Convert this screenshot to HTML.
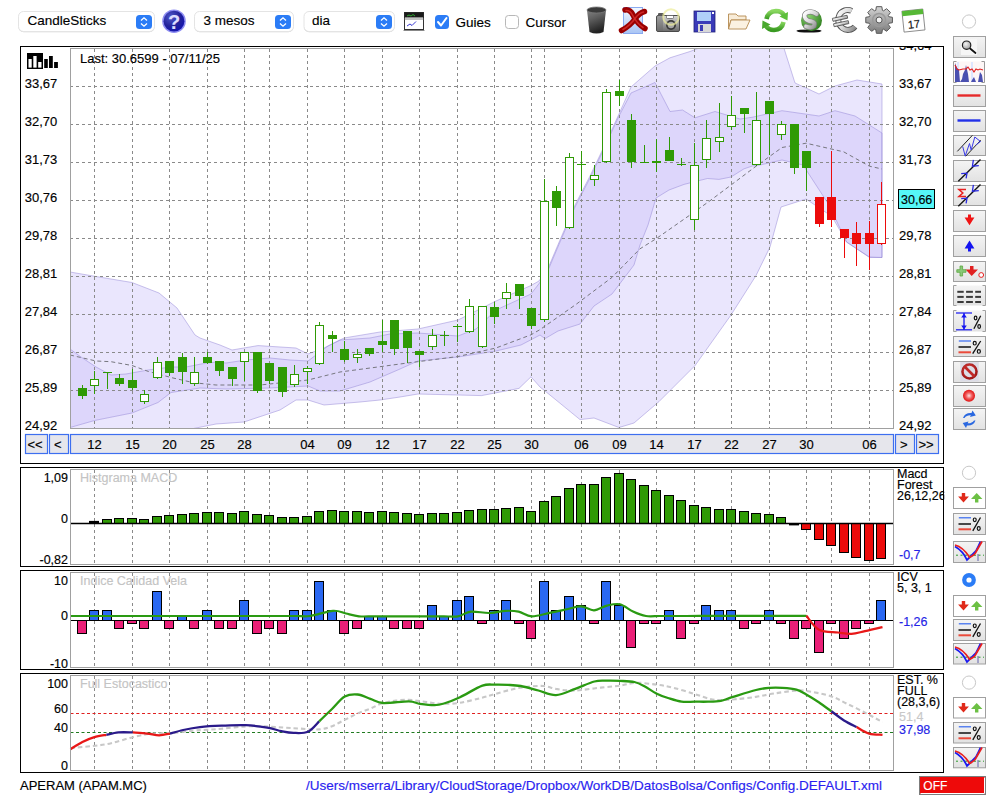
<!DOCTYPE html>
<html><head><meta charset="utf-8"><title>Chart</title>
<style>html,body{margin:0;padding:0;background:#fff;width:1000px;height:800px;overflow:hidden}svg{display:block}</style>
</head><body>
<svg width="1000" height="800" viewBox="0 0 1000 800">
<rect width="1000" height="800" fill="#fff"/>
<defs>
<clipPath id="cmain"><rect x="70.5" y="48.5" width="823.0" height="380.0"/></clipPath>
<clipPath id="kg"><rect x="60" y="670" width="840" height="43.4"/></clipPath>
<clipPath id="kn"><rect x="60" y="713.4" width="840" height="19.2"/></clipPath>
<clipPath id="kr"><rect x="60" y="732.6" width="840" height="40"/></clipPath>
</defs>
<rect x="20.5" y="46.5" width="923" height="417.0" fill="#fff" stroke="#000" stroke-width="1"/>
<rect x="70.5" y="48.5" width="823.0" height="380.0" fill="#fff" stroke="none"/>
<g clip-path="url(#cmain)">
<polygon points="70.0,272.0 96.0,276.5 132.0,282.5 159.0,293.0 177.0,308.0 195.0,335.0 200.0,338.0 220.0,345.0 232.0,350.0 258.0,345.6 296.0,348.0 308.0,354.0 324.0,348.0 344.0,338.0 380.0,332.0 418.0,329.0 458.0,320.0 496.0,301.0 531.0,285.5 539.0,281.0 549.0,266.0 560.0,240.0 575.0,205.0 590.0,176.0 601.0,153.0 619.0,114.0 631.0,87.0 655.0,66.0 670.0,57.8 690.0,51.5 715.0,42.0 782.0,42.0 795.0,83.0 819.0,94.0 835.0,86.0 857.0,80.0 882.0,84.0 882.0,257.5 869.5,257.5 846.5,242.0 832.0,216.5 806.0,199.0 781.0,207.0 770.0,247.0 756.0,275.6 731.0,315.0 695.0,365.6 659.0,401.6 634.0,423.0 619.0,427.5 594.0,418.0 580.0,419.6 558.0,401.6 545.0,391.0 540.0,387.0 531.0,376.8 519.0,388.4 481.5,395.6 418.0,394.0 400.0,397.0 380.0,400.0 360.0,402.0 324.0,405.0 308.0,400.0 296.0,400.0 280.0,410.0 244.0,422.0 216.0,424.0 193.5,428.5 150.0,438.0 70.0,445.0" fill="rgb(108,78,240)" fill-opacity="0.14" stroke="rgb(150,135,215)" stroke-opacity="0.5" stroke-width="1"/>
<polygon points="70.0,349.0 81.0,357.0 96.0,367.0 111.0,375.0 126.0,374.0 148.0,370.0 171.0,367.0 186.0,367.0 201.0,364.0 216.0,362.0 226.0,363.0 246.0,360.0 270.0,358.0 290.0,360.0 308.0,361.0 328.0,346.0 340.0,340.0 370.0,338.0 390.0,334.0 418.0,333.0 458.0,336.0 476.0,329.0 496.0,310.0 531.0,294.0 539.5,283.0 549.0,268.0 560.0,242.0 575.0,207.0 590.0,178.0 601.0,155.0 619.0,116.0 631.0,93.0 655.0,82.5 670.0,111.5 682.5,110.0 695.0,117.8 715.0,111.5 740.0,119.0 752.0,117.3 782.0,110.7 819.0,116.0 835.0,110.7 855.0,116.0 882.0,133.0 882.0,257.5 869.5,257.0 846.5,242.0 829.0,205.0 803.0,165.0 782.0,160.0 760.0,165.0 752.5,166.0 744.0,168.8 731.0,177.0 719.0,179.4 707.5,178.5 699.0,180.6 684.0,184.4 669.0,190.0 656.0,198.0 648.0,225.0 640.0,245.0 634.0,265.0 612.0,294.0 594.0,306.0 580.0,324.0 558.0,331.0 545.0,338.6 540.0,335.0 521.0,345.0 496.0,351.0 458.0,357.0 417.7,361.0 400.0,369.0 370.0,382.0 340.0,391.0 320.0,391.0 308.0,386.0 270.0,388.0 226.0,389.0 200.0,388.0 171.0,392.5 158.0,402.5 132.0,413.0 94.5,420.5 70.0,427.5" fill="rgb(108,78,240)" fill-opacity="0.10" stroke="rgb(150,135,215)" stroke-opacity="0.5" stroke-width="1"/>
</g>
<line x1="70" y1="86.5" x2="893.5" y2="86.5" stroke="#8a8a8a" stroke-width="1" stroke-dasharray="3,3"/>
<line x1="70" y1="124.5" x2="893.5" y2="124.5" stroke="#8a8a8a" stroke-width="1" stroke-dasharray="3,3"/>
<line x1="70" y1="162.5" x2="893.5" y2="162.5" stroke="#8a8a8a" stroke-width="1" stroke-dasharray="3,3"/>
<line x1="70" y1="200.5" x2="893.5" y2="200.5" stroke="#8a8a8a" stroke-width="1" stroke-dasharray="3,3"/>
<line x1="70" y1="238.5" x2="893.5" y2="238.5" stroke="#8a8a8a" stroke-width="1" stroke-dasharray="3,3"/>
<line x1="70" y1="276.5" x2="893.5" y2="276.5" stroke="#8a8a8a" stroke-width="1" stroke-dasharray="3,3"/>
<line x1="70" y1="314.5" x2="893.5" y2="314.5" stroke="#8a8a8a" stroke-width="1" stroke-dasharray="3,3"/>
<line x1="70" y1="352.5" x2="893.5" y2="352.5" stroke="#8a8a8a" stroke-width="1" stroke-dasharray="3,3"/>
<line x1="70" y1="390.5" x2="893.5" y2="390.5" stroke="#8a8a8a" stroke-width="1" stroke-dasharray="3,3"/>
<line x1="94.5" y1="49" x2="94.5" y2="428.5" stroke="#8a8a8a" stroke-width="1" stroke-dasharray="3,3"/>
<line x1="132.5" y1="49" x2="132.5" y2="428.5" stroke="#8a8a8a" stroke-width="1" stroke-dasharray="3,3"/>
<line x1="169.5" y1="49" x2="169.5" y2="428.5" stroke="#8a8a8a" stroke-width="1" stroke-dasharray="3,3"/>
<line x1="207.5" y1="49" x2="207.5" y2="428.5" stroke="#8a8a8a" stroke-width="1" stroke-dasharray="3,3"/>
<line x1="244.5" y1="49" x2="244.5" y2="428.5" stroke="#8a8a8a" stroke-width="1" stroke-dasharray="3,3"/>
<line x1="269.5" y1="49" x2="269.5" y2="428.5" stroke="#8a8a8a" stroke-width="1" stroke-dasharray="3,3"/>
<line x1="307.5" y1="49" x2="307.5" y2="428.5" stroke="#8a8a8a" stroke-width="1" stroke-dasharray="3,3"/>
<line x1="344.5" y1="49" x2="344.5" y2="428.5" stroke="#8a8a8a" stroke-width="1" stroke-dasharray="3,3"/>
<line x1="382.5" y1="49" x2="382.5" y2="428.5" stroke="#8a8a8a" stroke-width="1" stroke-dasharray="3,3"/>
<line x1="419.5" y1="49" x2="419.5" y2="428.5" stroke="#8a8a8a" stroke-width="1" stroke-dasharray="3,3"/>
<line x1="457.5" y1="49" x2="457.5" y2="428.5" stroke="#8a8a8a" stroke-width="1" stroke-dasharray="3,3"/>
<line x1="494.5" y1="49" x2="494.5" y2="428.5" stroke="#8a8a8a" stroke-width="1" stroke-dasharray="3,3"/>
<line x1="531.5" y1="49" x2="531.5" y2="428.5" stroke="#8a8a8a" stroke-width="1" stroke-dasharray="3,3"/>
<line x1="544.5" y1="49" x2="544.5" y2="428.5" stroke="#8a8a8a" stroke-width="1" stroke-dasharray="3,3"/>
<line x1="581.5" y1="49" x2="581.5" y2="428.5" stroke="#8a8a8a" stroke-width="1" stroke-dasharray="3,3"/>
<line x1="619.5" y1="49" x2="619.5" y2="428.5" stroke="#8a8a8a" stroke-width="1" stroke-dasharray="3,3"/>
<line x1="656.5" y1="49" x2="656.5" y2="428.5" stroke="#8a8a8a" stroke-width="1" stroke-dasharray="3,3"/>
<line x1="694.5" y1="49" x2="694.5" y2="428.5" stroke="#8a8a8a" stroke-width="1" stroke-dasharray="3,3"/>
<line x1="731.5" y1="49" x2="731.5" y2="428.5" stroke="#8a8a8a" stroke-width="1" stroke-dasharray="3,3"/>
<line x1="769.5" y1="49" x2="769.5" y2="428.5" stroke="#8a8a8a" stroke-width="1" stroke-dasharray="3,3"/>
<line x1="806.5" y1="49" x2="806.5" y2="428.5" stroke="#8a8a8a" stroke-width="1" stroke-dasharray="3,3"/>
<line x1="831.5" y1="49" x2="831.5" y2="428.5" stroke="#8a8a8a" stroke-width="1" stroke-dasharray="3,3"/>
<line x1="869.5" y1="49" x2="869.5" y2="428.5" stroke="#8a8a8a" stroke-width="1" stroke-dasharray="3,3"/>
<polyline points="70.0,355.0 96.0,361.0 111.0,361.7 132.0,365.5 148.5,371.5 171.0,377.5 193.5,382.7 216.0,385.0 260.0,385.0 308.0,380.0 340.0,372.0 380.0,366.7 400.0,364.0 458.0,356.5 496.0,348.0 531.0,334.8 540.0,329.6 576.0,304.4 612.0,277.4 640.0,248.8 656.0,238.8 690.0,215.0 711.0,200.0 731.0,185.0 755.0,167.0 782.0,147.5 806.0,143.2 843.6,151.8 869.5,166.2 882.0,169.0" fill="none" stroke="#77777f" stroke-width="1" stroke-dasharray="4,3"/>
<line x1="82.5" y1="385" x2="82.5" y2="399" stroke="#2f9a05" stroke-width="1"/>
<rect x="78.0" y="388" width="9" height="8" fill="#2f9a05"/>
<line x1="94.5" y1="371" x2="94.5" y2="394" stroke="#2f9a05" stroke-width="1"/>
<rect x="90.5" y="379.5" width="8" height="6" fill="#fff" stroke="#2f9a05" stroke-width="1"/>
<line x1="107.5" y1="372" x2="107.5" y2="389" stroke="#2f9a05" stroke-width="1"/>
<line x1="103.0" y1="372.5" x2="112.0" y2="372.5" stroke="#2f9a05" stroke-width="1"/>
<line x1="119.5" y1="374" x2="119.5" y2="386" stroke="#2f9a05" stroke-width="1"/>
<rect x="115.0" y="378" width="9" height="6" fill="#2f9a05"/>
<line x1="132.5" y1="369" x2="132.5" y2="390" stroke="#2f9a05" stroke-width="1"/>
<rect x="128.0" y="380" width="9" height="8" fill="#2f9a05"/>
<line x1="144.5" y1="390" x2="144.5" y2="404" stroke="#2f9a05" stroke-width="1"/>
<rect x="140.5" y="394.5" width="8" height="7" fill="#fff" stroke="#2f9a05" stroke-width="1"/>
<line x1="157.5" y1="357" x2="157.5" y2="379" stroke="#2f9a05" stroke-width="1"/>
<rect x="153.5" y="362.5" width="8" height="15" fill="#fff" stroke="#2f9a05" stroke-width="1"/>
<line x1="169.5" y1="361" x2="169.5" y2="376" stroke="#2f9a05" stroke-width="1"/>
<rect x="165.0" y="361" width="9" height="12" fill="#2f9a05"/>
<line x1="182.5" y1="353" x2="182.5" y2="384" stroke="#2f9a05" stroke-width="1"/>
<rect x="178.0" y="357" width="9" height="15" fill="#2f9a05"/>
<line x1="194.5" y1="357" x2="194.5" y2="386" stroke="#2f9a05" stroke-width="1"/>
<rect x="190.5" y="372.5" width="8" height="11" fill="#fff" stroke="#2f9a05" stroke-width="1"/>
<line x1="207.5" y1="352" x2="207.5" y2="364" stroke="#2f9a05" stroke-width="1"/>
<rect x="203.0" y="357" width="9" height="6" fill="#2f9a05"/>
<line x1="219.5" y1="361" x2="219.5" y2="376" stroke="#2f9a05" stroke-width="1"/>
<rect x="215.0" y="361" width="9" height="10" fill="#2f9a05"/>
<line x1="232.5" y1="367" x2="232.5" y2="386" stroke="#2f9a05" stroke-width="1"/>
<rect x="228.0" y="367" width="9" height="12" fill="#2f9a05"/>
<line x1="244.5" y1="352" x2="244.5" y2="381" stroke="#2f9a05" stroke-width="1"/>
<rect x="240.5" y="352.5" width="8" height="9" fill="#fff" stroke="#2f9a05" stroke-width="1"/>
<line x1="257.5" y1="352" x2="257.5" y2="393" stroke="#2f9a05" stroke-width="1"/>
<rect x="253.0" y="352" width="9" height="39" fill="#2f9a05"/>
<line x1="269.5" y1="363" x2="269.5" y2="384" stroke="#2f9a05" stroke-width="1"/>
<rect x="265.0" y="363" width="9" height="18" fill="#2f9a05"/>
<line x1="282.5" y1="367" x2="282.5" y2="397" stroke="#2f9a05" stroke-width="1"/>
<rect x="278.0" y="367" width="9" height="25" fill="#2f9a05"/>
<line x1="294.5" y1="365" x2="294.5" y2="387" stroke="#2f9a05" stroke-width="1"/>
<rect x="290.5" y="374.5" width="8" height="10" fill="#fff" stroke="#2f9a05" stroke-width="1"/>
<line x1="307.5" y1="366" x2="307.5" y2="384" stroke="#2f9a05" stroke-width="1"/>
<rect x="303.5" y="368.5" width="8" height="3" fill="#fff" stroke="#2f9a05" stroke-width="1"/>
<line x1="319.5" y1="322" x2="319.5" y2="365" stroke="#2f9a05" stroke-width="1"/>
<rect x="315.5" y="325.5" width="8" height="38" fill="#fff" stroke="#2f9a05" stroke-width="1"/>
<line x1="332.5" y1="331" x2="332.5" y2="352" stroke="#2f9a05" stroke-width="1"/>
<rect x="328.0" y="335" width="9" height="4" fill="#2f9a05"/>
<line x1="344.5" y1="341" x2="344.5" y2="362" stroke="#2f9a05" stroke-width="1"/>
<rect x="340.0" y="349" width="9" height="11" fill="#2f9a05"/>
<line x1="357.5" y1="349" x2="357.5" y2="363" stroke="#2f9a05" stroke-width="1"/>
<rect x="353.5" y="354.5" width="8" height="3" fill="#fff" stroke="#2f9a05" stroke-width="1"/>
<line x1="369.5" y1="348" x2="369.5" y2="356" stroke="#2f9a05" stroke-width="1"/>
<rect x="365.0" y="348" width="9" height="6" fill="#2f9a05"/>
<line x1="382.5" y1="320" x2="382.5" y2="352" stroke="#2f9a05" stroke-width="1"/>
<rect x="378.0" y="341" width="9" height="4" fill="#2f9a05"/>
<line x1="394.5" y1="320" x2="394.5" y2="355" stroke="#2f9a05" stroke-width="1"/>
<rect x="390.0" y="320" width="9" height="29" fill="#2f9a05"/>
<line x1="407.5" y1="331" x2="407.5" y2="363" stroke="#2f9a05" stroke-width="1"/>
<rect x="403.0" y="331" width="9" height="17" fill="#2f9a05"/>
<line x1="419.5" y1="351" x2="419.5" y2="367" stroke="#2f9a05" stroke-width="1"/>
<rect x="415.0" y="351" width="9" height="4" fill="#2f9a05"/>
<line x1="432.5" y1="329" x2="432.5" y2="350" stroke="#2f9a05" stroke-width="1"/>
<rect x="428.5" y="335.5" width="8" height="11" fill="#fff" stroke="#2f9a05" stroke-width="1"/>
<line x1="444.5" y1="331" x2="444.5" y2="346" stroke="#2f9a05" stroke-width="1"/>
<line x1="440.0" y1="335.5" x2="449.0" y2="335.5" stroke="#2f9a05" stroke-width="1"/>
<line x1="457.5" y1="324" x2="457.5" y2="342" stroke="#2f9a05" stroke-width="1"/>
<line x1="453.0" y1="326.5" x2="462.0" y2="326.5" stroke="#2f9a05" stroke-width="1"/>
<line x1="469.5" y1="299" x2="469.5" y2="333" stroke="#2f9a05" stroke-width="1"/>
<rect x="465.5" y="306.5" width="8" height="25" fill="#fff" stroke="#2f9a05" stroke-width="1"/>
<line x1="482.5" y1="306" x2="482.5" y2="348" stroke="#2f9a05" stroke-width="1"/>
<rect x="478.5" y="306.5" width="8" height="40" fill="#fff" stroke="#2f9a05" stroke-width="1"/>
<line x1="494.5" y1="302" x2="494.5" y2="324" stroke="#2f9a05" stroke-width="1"/>
<rect x="490.0" y="307" width="9" height="10" fill="#2f9a05"/>
<line x1="506.5" y1="283" x2="506.5" y2="309" stroke="#2f9a05" stroke-width="1"/>
<rect x="502.5" y="292.5" width="8" height="6" fill="#fff" stroke="#2f9a05" stroke-width="1"/>
<line x1="519.5" y1="284" x2="519.5" y2="309" stroke="#2f9a05" stroke-width="1"/>
<rect x="515.0" y="284" width="9" height="12" fill="#2f9a05"/>
<line x1="531.5" y1="308" x2="531.5" y2="329" stroke="#2f9a05" stroke-width="1"/>
<rect x="527.0" y="308" width="9" height="18" fill="#2f9a05"/>
<line x1="544.5" y1="179" x2="544.5" y2="322" stroke="#2f9a05" stroke-width="1"/>
<rect x="540.5" y="201.5" width="8" height="118" fill="#fff" stroke="#2f9a05" stroke-width="1"/>
<line x1="556.5" y1="186" x2="556.5" y2="226" stroke="#2f9a05" stroke-width="1"/>
<rect x="552.0" y="191" width="9" height="17" fill="#2f9a05"/>
<line x1="569.5" y1="153" x2="569.5" y2="229" stroke="#2f9a05" stroke-width="1"/>
<rect x="565.5" y="157.5" width="8" height="70" fill="#fff" stroke="#2f9a05" stroke-width="1"/>
<line x1="581.5" y1="151" x2="581.5" y2="191" stroke="#2f9a05" stroke-width="1"/>
<line x1="577.0" y1="164.5" x2="586.0" y2="164.5" stroke="#2f9a05" stroke-width="1"/>
<line x1="594.5" y1="165" x2="594.5" y2="186" stroke="#2f9a05" stroke-width="1"/>
<rect x="590.5" y="175.5" width="8" height="4" fill="#fff" stroke="#2f9a05" stroke-width="1"/>
<line x1="606.5" y1="89" x2="606.5" y2="163" stroke="#2f9a05" stroke-width="1"/>
<rect x="602.5" y="92.5" width="8" height="69" fill="#fff" stroke="#2f9a05" stroke-width="1"/>
<line x1="619.5" y1="80" x2="619.5" y2="106" stroke="#2f9a05" stroke-width="1"/>
<rect x="615.0" y="91" width="9" height="5" fill="#2f9a05"/>
<line x1="631.5" y1="114" x2="631.5" y2="168" stroke="#2f9a05" stroke-width="1"/>
<rect x="627.0" y="120" width="9" height="42" fill="#2f9a05"/>
<line x1="644.5" y1="145" x2="644.5" y2="162" stroke="#2f9a05" stroke-width="1"/>
<line x1="640.0" y1="162.5" x2="649.0" y2="162.5" stroke="#2f9a05" stroke-width="1"/>
<line x1="656.5" y1="139" x2="656.5" y2="172" stroke="#2f9a05" stroke-width="1"/>
<rect x="652.0" y="161" width="9" height="2" fill="#2f9a05"/>
<line x1="669.5" y1="137" x2="669.5" y2="161" stroke="#2f9a05" stroke-width="1"/>
<rect x="665.0" y="150" width="9" height="11" fill="#2f9a05"/>
<line x1="681.5" y1="158" x2="681.5" y2="166" stroke="#2f9a05" stroke-width="1"/>
<line x1="677.0" y1="164.5" x2="686.0" y2="164.5" stroke="#2f9a05" stroke-width="1"/>
<line x1="694.5" y1="143" x2="694.5" y2="230" stroke="#2f9a05" stroke-width="1"/>
<rect x="690.5" y="165.5" width="8" height="54" fill="#fff" stroke="#2f9a05" stroke-width="1"/>
<line x1="706.5" y1="120" x2="706.5" y2="168" stroke="#2f9a05" stroke-width="1"/>
<rect x="702.5" y="138.5" width="8" height="21" fill="#fff" stroke="#2f9a05" stroke-width="1"/>
<line x1="719.5" y1="103" x2="719.5" y2="152" stroke="#2f9a05" stroke-width="1"/>
<rect x="715.5" y="137.5" width="8" height="4" fill="#fff" stroke="#2f9a05" stroke-width="1"/>
<line x1="731.5" y1="96" x2="731.5" y2="130" stroke="#2f9a05" stroke-width="1"/>
<rect x="727.5" y="115.5" width="8" height="11" fill="#fff" stroke="#2f9a05" stroke-width="1"/>
<line x1="744.5" y1="108" x2="744.5" y2="133" stroke="#2f9a05" stroke-width="1"/>
<rect x="740.0" y="108" width="9" height="6" fill="#2f9a05"/>
<line x1="756.5" y1="92" x2="756.5" y2="166" stroke="#2f9a05" stroke-width="1"/>
<rect x="752.5" y="120.5" width="8" height="44" fill="#fff" stroke="#2f9a05" stroke-width="1"/>
<line x1="769.5" y1="101" x2="769.5" y2="155" stroke="#2f9a05" stroke-width="1"/>
<rect x="765.0" y="101" width="9" height="13" fill="#2f9a05"/>
<line x1="781.5" y1="121" x2="781.5" y2="140" stroke="#2f9a05" stroke-width="1"/>
<rect x="777.5" y="124.5" width="8" height="10" fill="#fff" stroke="#2f9a05" stroke-width="1"/>
<line x1="794.5" y1="124" x2="794.5" y2="174" stroke="#2f9a05" stroke-width="1"/>
<rect x="790.0" y="124" width="9" height="44" fill="#2f9a05"/>
<line x1="806.5" y1="151" x2="806.5" y2="191" stroke="#2f9a05" stroke-width="1"/>
<rect x="802.0" y="151" width="9" height="17" fill="#2f9a05"/>
<line x1="819.5" y1="197" x2="819.5" y2="227" stroke="#ec0b0b" stroke-width="1"/>
<rect x="815.0" y="197" width="9" height="27" fill="#ec0b0b"/>
<line x1="831.5" y1="151" x2="831.5" y2="227" stroke="#ec0b0b" stroke-width="1"/>
<rect x="827.0" y="197" width="9" height="23" fill="#ec0b0b"/>
<line x1="844.5" y1="229" x2="844.5" y2="258" stroke="#ec0b0b" stroke-width="1"/>
<rect x="840.0" y="229" width="9" height="9" fill="#ec0b0b"/>
<line x1="856.5" y1="222" x2="856.5" y2="266" stroke="#ec0b0b" stroke-width="1"/>
<rect x="852.0" y="233" width="9" height="11" fill="#ec0b0b"/>
<line x1="869.5" y1="221" x2="869.5" y2="270" stroke="#ec0b0b" stroke-width="1"/>
<rect x="865.0" y="233" width="9" height="11" fill="#ec0b0b"/>
<line x1="881.5" y1="182" x2="881.5" y2="245" stroke="#ec0b0b" stroke-width="1"/>
<rect x="877.5" y="204.5" width="8" height="39" fill="#fff" stroke="#ec0b0b" stroke-width="1"/>
<rect x="70.5" y="48.5" width="823.0" height="380.0" fill="none" stroke="#a0a0a0" stroke-width="1"/>
<g font-family="Liberation Sans, sans-serif" font-size="13" fill="#000" stroke="#000" stroke-width="0.15">
<text x="24.8" y="88">33,67</text>
<text x="899" y="88">33,67</text>
<text x="24.8" y="126">32,70</text>
<text x="899" y="126">32,70</text>
<text x="24.8" y="164">31,73</text>
<text x="899" y="164">31,73</text>
<text x="24.8" y="202">30,76</text>
<text x="24.8" y="240">29,78</text>
<text x="899" y="240">29,78</text>
<text x="24.8" y="278">28,81</text>
<text x="899" y="278">28,81</text>
<text x="24.8" y="316">27,84</text>
<text x="899" y="316">27,84</text>
<text x="24.8" y="354">26,87</text>
<text x="899" y="354">26,87</text>
<text x="24.8" y="392">25,89</text>
<text x="899" y="392">25,89</text>
<text x="24.8" y="430">24,92</text>
<text x="899" y="430">24,92</text>
<text x="899" y="50">34,64</text>
</g>
<rect x="894" y="40" width="49" height="6" fill="#fff"/>
<rect x="20.5" y="46.5" width="923" height="417" fill="none" stroke="#000" stroke-width="1"/>
<rect x="898.5" y="189.5" width="36" height="19" fill="#55f7f7" stroke="#000" stroke-width="1"/>
<text x="901" y="203.5" font-family="Liberation Sans, sans-serif" font-size="12.5" fill="#000" stroke="#000" stroke-width="0.15">30,66</text>
<text x="80" y="62.7" font-family="Liberation Sans, sans-serif" font-size="13" fill="#000" stroke="#000" stroke-width="0.15">Last: 30.6599 - 07/11/25</text>
<rect x="27" y="53" width="16" height="16" fill="#000"/>
<rect x="28.5" y="59" width="3.2" height="8.6" fill="#fff"/><rect x="33.3" y="56" width="3.3" height="11.6" fill="#fff"/><rect x="38.2" y="62" width="3.3" height="5.6" fill="#fff"/>
<rect x="44.2" y="59" width="3.6" height="9" fill="#000"/><rect x="49" y="56" width="3.8" height="12" fill="#000"/><rect x="54.1" y="62" width="3.8" height="6" fill="#000"/>
<rect x="25.5" y="434.5" width="22" height="19" fill="#e6e6ec" stroke="#3d6ff0" stroke-width="1.2"/>
<rect x="49.5" y="434.5" width="19" height="19" fill="#e6e6ec" stroke="#3d6ff0" stroke-width="1.2"/>
<rect x="70.5" y="434.5" width="823" height="19" fill="#e6e6ec" stroke="#3d6ff0" stroke-width="1.2"/>
<rect x="895.5" y="434.5" width="19" height="19" fill="#e6e6ec" stroke="#3d6ff0" stroke-width="1.2"/>
<rect x="916.5" y="434.5" width="22" height="19" fill="#e6e6ec" stroke="#3d6ff0" stroke-width="1.2"/>
<g font-family="Liberation Sans, sans-serif" font-size="13" fill="#000" stroke="#000" stroke-width="0.15">
<text x="27.5" y="449">&lt;&lt;</text><text x="54" y="449">&lt;</text><text x="900" y="449">&gt;</text><text x="918.5" y="449">&gt;&gt;</text>
<text x="94.5" y="449" text-anchor="middle">12</text>
<text x="132.5" y="449" text-anchor="middle">15</text>
<text x="169.5" y="449" text-anchor="middle">20</text>
<text x="207.5" y="449" text-anchor="middle">25</text>
<text x="244.5" y="449" text-anchor="middle">28</text>
<text x="307.5" y="449" text-anchor="middle">04</text>
<text x="344.5" y="449" text-anchor="middle">09</text>
<text x="382.5" y="449" text-anchor="middle">12</text>
<text x="419.5" y="449" text-anchor="middle">17</text>
<text x="457.5" y="449" text-anchor="middle">22</text>
<text x="494.5" y="449" text-anchor="middle">25</text>
<text x="531.5" y="449" text-anchor="middle">30</text>
<text x="581.5" y="449" text-anchor="middle">06</text>
<text x="619.5" y="449" text-anchor="middle">09</text>
<text x="656.5" y="449" text-anchor="middle">14</text>
<text x="694.5" y="449" text-anchor="middle">17</text>
<text x="731.5" y="449" text-anchor="middle">22</text>
<text x="769.5" y="449" text-anchor="middle">27</text>
<text x="806.5" y="449" text-anchor="middle">30</text>
<text x="869.5" y="449" text-anchor="middle">06</text>
</g>
<rect x="20.5" y="467.5" width="923" height="99.0" fill="#fff" stroke="#000" stroke-width="1"/>
<line x1="94.5" y1="470" x2="94.5" y2="564.5" stroke="#8a8a8a" stroke-width="1" stroke-dasharray="3,3"/>
<line x1="132.5" y1="470" x2="132.5" y2="564.5" stroke="#8a8a8a" stroke-width="1" stroke-dasharray="3,3"/>
<line x1="169.5" y1="470" x2="169.5" y2="564.5" stroke="#8a8a8a" stroke-width="1" stroke-dasharray="3,3"/>
<line x1="207.5" y1="470" x2="207.5" y2="564.5" stroke="#8a8a8a" stroke-width="1" stroke-dasharray="3,3"/>
<line x1="244.5" y1="470" x2="244.5" y2="564.5" stroke="#8a8a8a" stroke-width="1" stroke-dasharray="3,3"/>
<line x1="269.5" y1="470" x2="269.5" y2="564.5" stroke="#8a8a8a" stroke-width="1" stroke-dasharray="3,3"/>
<line x1="307.5" y1="470" x2="307.5" y2="564.5" stroke="#8a8a8a" stroke-width="1" stroke-dasharray="3,3"/>
<line x1="344.5" y1="470" x2="344.5" y2="564.5" stroke="#8a8a8a" stroke-width="1" stroke-dasharray="3,3"/>
<line x1="382.5" y1="470" x2="382.5" y2="564.5" stroke="#8a8a8a" stroke-width="1" stroke-dasharray="3,3"/>
<line x1="419.5" y1="470" x2="419.5" y2="564.5" stroke="#8a8a8a" stroke-width="1" stroke-dasharray="3,3"/>
<line x1="457.5" y1="470" x2="457.5" y2="564.5" stroke="#8a8a8a" stroke-width="1" stroke-dasharray="3,3"/>
<line x1="494.5" y1="470" x2="494.5" y2="564.5" stroke="#8a8a8a" stroke-width="1" stroke-dasharray="3,3"/>
<line x1="531.5" y1="470" x2="531.5" y2="564.5" stroke="#8a8a8a" stroke-width="1" stroke-dasharray="3,3"/>
<line x1="544.5" y1="470" x2="544.5" y2="564.5" stroke="#8a8a8a" stroke-width="1" stroke-dasharray="3,3"/>
<line x1="581.5" y1="470" x2="581.5" y2="564.5" stroke="#8a8a8a" stroke-width="1" stroke-dasharray="3,3"/>
<line x1="619.5" y1="470" x2="619.5" y2="564.5" stroke="#8a8a8a" stroke-width="1" stroke-dasharray="3,3"/>
<line x1="656.5" y1="470" x2="656.5" y2="564.5" stroke="#8a8a8a" stroke-width="1" stroke-dasharray="3,3"/>
<line x1="694.5" y1="470" x2="694.5" y2="564.5" stroke="#8a8a8a" stroke-width="1" stroke-dasharray="3,3"/>
<line x1="731.5" y1="470" x2="731.5" y2="564.5" stroke="#8a8a8a" stroke-width="1" stroke-dasharray="3,3"/>
<line x1="769.5" y1="470" x2="769.5" y2="564.5" stroke="#8a8a8a" stroke-width="1" stroke-dasharray="3,3"/>
<line x1="806.5" y1="470" x2="806.5" y2="564.5" stroke="#8a8a8a" stroke-width="1" stroke-dasharray="3,3"/>
<line x1="831.5" y1="470" x2="831.5" y2="564.5" stroke="#8a8a8a" stroke-width="1" stroke-dasharray="3,3"/>
<line x1="869.5" y1="470" x2="869.5" y2="564.5" stroke="#8a8a8a" stroke-width="1" stroke-dasharray="3,3"/>
<text x="80" y="481.7" font-family="Liberation Sans, sans-serif" font-size="12.5" fill="#c4c4c4" stroke="#c4c4c4" stroke-width="0.15">Histgrama MACD</text>
<rect x="89.0" y="520.9" width="10" height="3.1000000000000227" fill="#000"/>
<rect x="102.5" y="519.5" width="9" height="4.0" fill="#2f9a05" stroke="#000" stroke-width="1"/>
<rect x="114.5" y="518.5" width="9" height="5.0" fill="#2f9a05" stroke="#000" stroke-width="1"/>
<rect x="127.5" y="518.5" width="9" height="5.0" fill="#2f9a05" stroke="#000" stroke-width="1"/>
<rect x="139.5" y="519.5" width="9" height="4.0" fill="#2f9a05" stroke="#000" stroke-width="1"/>
<rect x="152.5" y="516.5" width="9" height="7.0" fill="#2f9a05" stroke="#000" stroke-width="1"/>
<rect x="164.5" y="515.5" width="9" height="8.0" fill="#2f9a05" stroke="#000" stroke-width="1"/>
<rect x="177.5" y="514.5" width="9" height="9.0" fill="#2f9a05" stroke="#000" stroke-width="1"/>
<rect x="189.5" y="513.5" width="9" height="10.0" fill="#2f9a05" stroke="#000" stroke-width="1"/>
<rect x="202.5" y="512.5" width="9" height="11.0" fill="#2f9a05" stroke="#000" stroke-width="1"/>
<rect x="214.5" y="512.5" width="9" height="11.0" fill="#2f9a05" stroke="#000" stroke-width="1"/>
<rect x="227.5" y="513.5" width="9" height="10.0" fill="#2f9a05" stroke="#000" stroke-width="1"/>
<rect x="239.5" y="511.5" width="9" height="12.0" fill="#2f9a05" stroke="#000" stroke-width="1"/>
<rect x="252.5" y="514.5" width="9" height="9.0" fill="#2f9a05" stroke="#000" stroke-width="1"/>
<rect x="264.5" y="515.5" width="9" height="8.0" fill="#2f9a05" stroke="#000" stroke-width="1"/>
<rect x="277.5" y="517.5" width="9" height="6.0" fill="#2f9a05" stroke="#000" stroke-width="1"/>
<rect x="289.5" y="517.5" width="9" height="6.0" fill="#2f9a05" stroke="#000" stroke-width="1"/>
<rect x="302.5" y="516.5" width="9" height="7.0" fill="#2f9a05" stroke="#000" stroke-width="1"/>
<rect x="314.5" y="511.5" width="9" height="12.0" fill="#2f9a05" stroke="#000" stroke-width="1"/>
<rect x="327.5" y="510.5" width="9" height="13.0" fill="#2f9a05" stroke="#000" stroke-width="1"/>
<rect x="339.5" y="511.5" width="9" height="12.0" fill="#2f9a05" stroke="#000" stroke-width="1"/>
<rect x="352.5" y="511.5" width="9" height="12.0" fill="#2f9a05" stroke="#000" stroke-width="1"/>
<rect x="364.5" y="512.5" width="9" height="11.0" fill="#2f9a05" stroke="#000" stroke-width="1"/>
<rect x="377.5" y="511.5" width="9" height="12.0" fill="#2f9a05" stroke="#000" stroke-width="1"/>
<rect x="389.5" y="512.5" width="9" height="11.0" fill="#2f9a05" stroke="#000" stroke-width="1"/>
<rect x="402.5" y="513.5" width="9" height="10.0" fill="#2f9a05" stroke="#000" stroke-width="1"/>
<rect x="414.5" y="514.5" width="9" height="9.0" fill="#2f9a05" stroke="#000" stroke-width="1"/>
<rect x="427.5" y="513.5" width="9" height="10.0" fill="#2f9a05" stroke="#000" stroke-width="1"/>
<rect x="439.5" y="513.5" width="9" height="10.0" fill="#2f9a05" stroke="#000" stroke-width="1"/>
<rect x="452.5" y="512.5" width="9" height="11.0" fill="#2f9a05" stroke="#000" stroke-width="1"/>
<rect x="464.5" y="510.5" width="9" height="13.0" fill="#2f9a05" stroke="#000" stroke-width="1"/>
<rect x="477.5" y="509.5" width="9" height="14.0" fill="#2f9a05" stroke="#000" stroke-width="1"/>
<rect x="489.5" y="509.5" width="9" height="14.0" fill="#2f9a05" stroke="#000" stroke-width="1"/>
<rect x="501.5" y="508.5" width="9" height="15.0" fill="#2f9a05" stroke="#000" stroke-width="1"/>
<rect x="514.5" y="507.5" width="9" height="16.0" fill="#2f9a05" stroke="#000" stroke-width="1"/>
<rect x="526.5" y="511.5" width="9" height="12.0" fill="#2f9a05" stroke="#000" stroke-width="1"/>
<rect x="539.5" y="501.5" width="9" height="22.0" fill="#2f9a05" stroke="#000" stroke-width="1"/>
<rect x="551.5" y="496.5" width="9" height="27.0" fill="#2f9a05" stroke="#000" stroke-width="1"/>
<rect x="564.5" y="488.5" width="9" height="35.0" fill="#2f9a05" stroke="#000" stroke-width="1"/>
<rect x="576.5" y="484.5" width="9" height="39.0" fill="#2f9a05" stroke="#000" stroke-width="1"/>
<rect x="589.5" y="484.5" width="9" height="39.0" fill="#2f9a05" stroke="#000" stroke-width="1"/>
<rect x="601.5" y="477.5" width="9" height="46.0" fill="#2f9a05" stroke="#000" stroke-width="1"/>
<rect x="614.5" y="473.5" width="9" height="50.0" fill="#2f9a05" stroke="#000" stroke-width="1"/>
<rect x="626.5" y="479.5" width="9" height="44.0" fill="#2f9a05" stroke="#000" stroke-width="1"/>
<rect x="639.5" y="485.5" width="9" height="38.0" fill="#2f9a05" stroke="#000" stroke-width="1"/>
<rect x="651.5" y="490.5" width="9" height="33.0" fill="#2f9a05" stroke="#000" stroke-width="1"/>
<rect x="664.5" y="495.5" width="9" height="28.0" fill="#2f9a05" stroke="#000" stroke-width="1"/>
<rect x="676.5" y="500.5" width="9" height="23.0" fill="#2f9a05" stroke="#000" stroke-width="1"/>
<rect x="689.5" y="505.5" width="9" height="18.0" fill="#2f9a05" stroke="#000" stroke-width="1"/>
<rect x="701.5" y="507.5" width="9" height="16.0" fill="#2f9a05" stroke="#000" stroke-width="1"/>
<rect x="714.5" y="509.5" width="9" height="14.0" fill="#2f9a05" stroke="#000" stroke-width="1"/>
<rect x="726.5" y="509.5" width="9" height="14.0" fill="#2f9a05" stroke="#000" stroke-width="1"/>
<rect x="739.5" y="511.5" width="9" height="12.0" fill="#2f9a05" stroke="#000" stroke-width="1"/>
<rect x="751.5" y="513.5" width="9" height="10.0" fill="#2f9a05" stroke="#000" stroke-width="1"/>
<rect x="764.5" y="514.5" width="9" height="9.0" fill="#2f9a05" stroke="#000" stroke-width="1"/>
<rect x="776.5" y="517.5" width="9" height="6.0" fill="#2f9a05" stroke="#000" stroke-width="1"/>
<rect x="789.0" y="523" width="10" height="2.3999999999999773" fill="#000"/>
<rect x="801.5" y="523.5" width="9" height="6.0" fill="#ec0b0b" stroke="#000" stroke-width="1"/>
<rect x="814.5" y="523.5" width="9" height="16.0" fill="#ec0b0b" stroke="#000" stroke-width="1"/>
<rect x="826.5" y="523.5" width="9" height="22.0" fill="#ec0b0b" stroke="#000" stroke-width="1"/>
<rect x="839.5" y="523.5" width="9" height="29.0" fill="#ec0b0b" stroke="#000" stroke-width="1"/>
<rect x="851.5" y="523.5" width="9" height="34.0" fill="#ec0b0b" stroke="#000" stroke-width="1"/>
<rect x="864.5" y="523.5" width="9" height="37.0" fill="#ec0b0b" stroke="#000" stroke-width="1"/>
<rect x="876.5" y="523.5" width="9" height="35.0" fill="#ec0b0b" stroke="#000" stroke-width="1"/>
<line x1="70.5" y1="523.5" x2="893.5" y2="523.5" stroke="#000" stroke-width="1.3"/>
<rect x="70.5" y="469.5" width="823.0" height="95.0" fill="none" stroke="#a0a0a0" stroke-width="1"/>
<g font-family="Liberation Sans, sans-serif" font-size="12.5" fill="#000" stroke="#000" stroke-width="0.15">
<text x="68" y="481.7" text-anchor="end">1,09</text><text x="68" y="523.3" text-anchor="end">0</text><text x="68" y="564.4" text-anchor="end">-0,82</text>
<text x="897" y="478">Macd</text><text x="897" y="488.8">Forest</text><text x="897" y="499.6">26,12,26</text>
</g>
<text x="899" y="558.5" font-family="Liberation Sans, sans-serif" font-size="12.5" fill="#2424e6" stroke="#2424e6" stroke-width="0.15">-0,7</text>
<rect x="20.5" y="570.5" width="923" height="99.0" fill="#fff" stroke="#000" stroke-width="1"/>
<line x1="94.5" y1="573" x2="94.5" y2="667.5" stroke="#8a8a8a" stroke-width="1" stroke-dasharray="3,3"/>
<line x1="132.5" y1="573" x2="132.5" y2="667.5" stroke="#8a8a8a" stroke-width="1" stroke-dasharray="3,3"/>
<line x1="169.5" y1="573" x2="169.5" y2="667.5" stroke="#8a8a8a" stroke-width="1" stroke-dasharray="3,3"/>
<line x1="207.5" y1="573" x2="207.5" y2="667.5" stroke="#8a8a8a" stroke-width="1" stroke-dasharray="3,3"/>
<line x1="244.5" y1="573" x2="244.5" y2="667.5" stroke="#8a8a8a" stroke-width="1" stroke-dasharray="3,3"/>
<line x1="269.5" y1="573" x2="269.5" y2="667.5" stroke="#8a8a8a" stroke-width="1" stroke-dasharray="3,3"/>
<line x1="307.5" y1="573" x2="307.5" y2="667.5" stroke="#8a8a8a" stroke-width="1" stroke-dasharray="3,3"/>
<line x1="344.5" y1="573" x2="344.5" y2="667.5" stroke="#8a8a8a" stroke-width="1" stroke-dasharray="3,3"/>
<line x1="382.5" y1="573" x2="382.5" y2="667.5" stroke="#8a8a8a" stroke-width="1" stroke-dasharray="3,3"/>
<line x1="419.5" y1="573" x2="419.5" y2="667.5" stroke="#8a8a8a" stroke-width="1" stroke-dasharray="3,3"/>
<line x1="457.5" y1="573" x2="457.5" y2="667.5" stroke="#8a8a8a" stroke-width="1" stroke-dasharray="3,3"/>
<line x1="494.5" y1="573" x2="494.5" y2="667.5" stroke="#8a8a8a" stroke-width="1" stroke-dasharray="3,3"/>
<line x1="531.5" y1="573" x2="531.5" y2="667.5" stroke="#8a8a8a" stroke-width="1" stroke-dasharray="3,3"/>
<line x1="544.5" y1="573" x2="544.5" y2="667.5" stroke="#8a8a8a" stroke-width="1" stroke-dasharray="3,3"/>
<line x1="581.5" y1="573" x2="581.5" y2="667.5" stroke="#8a8a8a" stroke-width="1" stroke-dasharray="3,3"/>
<line x1="619.5" y1="573" x2="619.5" y2="667.5" stroke="#8a8a8a" stroke-width="1" stroke-dasharray="3,3"/>
<line x1="656.5" y1="573" x2="656.5" y2="667.5" stroke="#8a8a8a" stroke-width="1" stroke-dasharray="3,3"/>
<line x1="694.5" y1="573" x2="694.5" y2="667.5" stroke="#8a8a8a" stroke-width="1" stroke-dasharray="3,3"/>
<line x1="731.5" y1="573" x2="731.5" y2="667.5" stroke="#8a8a8a" stroke-width="1" stroke-dasharray="3,3"/>
<line x1="769.5" y1="573" x2="769.5" y2="667.5" stroke="#8a8a8a" stroke-width="1" stroke-dasharray="3,3"/>
<line x1="806.5" y1="573" x2="806.5" y2="667.5" stroke="#8a8a8a" stroke-width="1" stroke-dasharray="3,3"/>
<line x1="831.5" y1="573" x2="831.5" y2="667.5" stroke="#8a8a8a" stroke-width="1" stroke-dasharray="3,3"/>
<line x1="869.5" y1="573" x2="869.5" y2="667.5" stroke="#8a8a8a" stroke-width="1" stroke-dasharray="3,3"/>
<text x="80" y="585.2" font-family="Liberation Sans, sans-serif" font-size="12.5" fill="#c4c4c4" stroke="#c4c4c4" stroke-width="0.15">Indice Calidad Vela</text>
<rect x="77.5" y="620.5" width="9" height="13.0" fill="#ea1f77" stroke="#000" stroke-width="1"/>
<rect x="89.5" y="610.5" width="9" height="10.0" fill="#2a68f2" stroke="#000" stroke-width="1"/>
<rect x="102.5" y="610.5" width="9" height="10.0" fill="#2a68f2" stroke="#000" stroke-width="1"/>
<rect x="114.5" y="620.5" width="9" height="8.0" fill="#ea1f77" stroke="#000" stroke-width="1"/>
<rect x="127.5" y="620.5" width="9" height="3.0" fill="#ea1f77" stroke="#000" stroke-width="1"/>
<rect x="139.5" y="620.5" width="9" height="8.0" fill="#ea1f77" stroke="#000" stroke-width="1"/>
<rect x="152.5" y="591.5" width="9" height="29.0" fill="#2a68f2" stroke="#000" stroke-width="1"/>
<rect x="164.5" y="620.5" width="9" height="8.0" fill="#ea1f77" stroke="#000" stroke-width="1"/>
<rect x="177.5" y="615.5" width="9" height="5.0" fill="#2a68f2" stroke="#000" stroke-width="1"/>
<rect x="189.5" y="620.5" width="9" height="8.0" fill="#ea1f77" stroke="#000" stroke-width="1"/>
<rect x="202.5" y="610.5" width="9" height="10.0" fill="#2a68f2" stroke="#000" stroke-width="1"/>
<rect x="214.5" y="620.5" width="9" height="8.0" fill="#ea1f77" stroke="#000" stroke-width="1"/>
<rect x="227.5" y="620.5" width="9" height="8.0" fill="#ea1f77" stroke="#000" stroke-width="1"/>
<rect x="239.5" y="600.5" width="9" height="20.0" fill="#2a68f2" stroke="#000" stroke-width="1"/>
<rect x="252.5" y="620.5" width="9" height="13.0" fill="#ea1f77" stroke="#000" stroke-width="1"/>
<rect x="264.5" y="620.5" width="9" height="8.0" fill="#ea1f77" stroke="#000" stroke-width="1"/>
<rect x="277.5" y="620.5" width="9" height="13.0" fill="#ea1f77" stroke="#000" stroke-width="1"/>
<rect x="289.5" y="610.5" width="9" height="10.0" fill="#2a68f2" stroke="#000" stroke-width="1"/>
<rect x="302.5" y="610.5" width="9" height="10.0" fill="#2a68f2" stroke="#000" stroke-width="1"/>
<rect x="314.5" y="581.5" width="9" height="39.0" fill="#2a68f2" stroke="#000" stroke-width="1"/>
<rect x="327.5" y="610.5" width="9" height="10.0" fill="#2a68f2" stroke="#000" stroke-width="1"/>
<rect x="339.5" y="620.5" width="9" height="13.0" fill="#ea1f77" stroke="#000" stroke-width="1"/>
<rect x="352.5" y="620.5" width="9" height="8.0" fill="#ea1f77" stroke="#000" stroke-width="1"/>
<rect x="364.5" y="616.5" width="9" height="4.0" fill="#2a68f2" stroke="#000" stroke-width="1"/>
<rect x="377.5" y="616.5" width="9" height="4.0" fill="#2a68f2" stroke="#000" stroke-width="1"/>
<rect x="389.5" y="620.5" width="9" height="8.0" fill="#ea1f77" stroke="#000" stroke-width="1"/>
<rect x="402.5" y="620.5" width="9" height="8.0" fill="#ea1f77" stroke="#000" stroke-width="1"/>
<rect x="414.5" y="620.5" width="9" height="8.0" fill="#ea1f77" stroke="#000" stroke-width="1"/>
<rect x="427.5" y="605.5" width="9" height="15.0" fill="#2a68f2" stroke="#000" stroke-width="1"/>
<rect x="439.5" y="616.5" width="9" height="4.0" fill="#2a68f2" stroke="#000" stroke-width="1"/>
<rect x="452.5" y="600.5" width="9" height="20.0" fill="#2a68f2" stroke="#000" stroke-width="1"/>
<rect x="464.5" y="596.5" width="9" height="24.0" fill="#2a68f2" stroke="#000" stroke-width="1"/>
<rect x="477.5" y="620.5" width="9" height="3.0" fill="#ea1f77" stroke="#000" stroke-width="1"/>
<rect x="489.5" y="610.5" width="9" height="10.0" fill="#2a68f2" stroke="#000" stroke-width="1"/>
<rect x="501.5" y="600.5" width="9" height="20.0" fill="#2a68f2" stroke="#000" stroke-width="1"/>
<rect x="514.5" y="620.5" width="9" height="3.0" fill="#ea1f77" stroke="#000" stroke-width="1"/>
<rect x="526.5" y="620.5" width="9" height="18.0" fill="#ea1f77" stroke="#000" stroke-width="1"/>
<rect x="539.5" y="581.5" width="9" height="39.0" fill="#2a68f2" stroke="#000" stroke-width="1"/>
<rect x="551.5" y="610.5" width="9" height="10.0" fill="#2a68f2" stroke="#000" stroke-width="1"/>
<rect x="564.5" y="596.5" width="9" height="24.0" fill="#2a68f2" stroke="#000" stroke-width="1"/>
<rect x="576.5" y="605.5" width="9" height="15.0" fill="#2a68f2" stroke="#000" stroke-width="1"/>
<rect x="589.5" y="620.5" width="9" height="3.0" fill="#ea1f77" stroke="#000" stroke-width="1"/>
<rect x="601.5" y="581.5" width="9" height="39.0" fill="#2a68f2" stroke="#000" stroke-width="1"/>
<rect x="614.5" y="605.5" width="9" height="15.0" fill="#2a68f2" stroke="#000" stroke-width="1"/>
<rect x="626.5" y="620.5" width="9" height="27.0" fill="#ea1f77" stroke="#000" stroke-width="1"/>
<rect x="639.5" y="620.5" width="9" height="3.0" fill="#ea1f77" stroke="#000" stroke-width="1"/>
<rect x="651.5" y="620.5" width="9" height="3.0" fill="#ea1f77" stroke="#000" stroke-width="1"/>
<rect x="664.5" y="610.5" width="9" height="10.0" fill="#2a68f2" stroke="#000" stroke-width="1"/>
<rect x="676.5" y="620.5" width="9" height="18.0" fill="#ea1f77" stroke="#000" stroke-width="1"/>
<rect x="689.5" y="620.5" width="9" height="3.0" fill="#ea1f77" stroke="#000" stroke-width="1"/>
<rect x="701.5" y="605.5" width="9" height="15.0" fill="#2a68f2" stroke="#000" stroke-width="1"/>
<rect x="714.5" y="610.5" width="9" height="10.0" fill="#2a68f2" stroke="#000" stroke-width="1"/>
<rect x="726.5" y="610.5" width="9" height="10.0" fill="#2a68f2" stroke="#000" stroke-width="1"/>
<rect x="739.5" y="620.5" width="9" height="8.0" fill="#ea1f77" stroke="#000" stroke-width="1"/>
<rect x="751.5" y="620.5" width="9" height="3.0" fill="#ea1f77" stroke="#000" stroke-width="1"/>
<rect x="764.5" y="610.5" width="9" height="10.0" fill="#2a68f2" stroke="#000" stroke-width="1"/>
<rect x="776.5" y="620.5" width="9" height="3.0" fill="#ea1f77" stroke="#000" stroke-width="1"/>
<rect x="789.5" y="620.5" width="9" height="18.0" fill="#ea1f77" stroke="#000" stroke-width="1"/>
<rect x="801.5" y="620.5" width="9" height="8.0" fill="#ea1f77" stroke="#000" stroke-width="1"/>
<rect x="814.5" y="620.5" width="9" height="32.0" fill="#ea1f77" stroke="#000" stroke-width="1"/>
<rect x="826.5" y="620.5" width="9" height="3.0" fill="#ea1f77" stroke="#000" stroke-width="1"/>
<rect x="839.5" y="620.5" width="9" height="18.0" fill="#ea1f77" stroke="#000" stroke-width="1"/>
<rect x="851.5" y="620.5" width="9" height="8.0" fill="#ea1f77" stroke="#000" stroke-width="1"/>
<rect x="864.5" y="620.5" width="9" height="3.0" fill="#ea1f77" stroke="#000" stroke-width="1"/>
<rect x="876.5" y="600.5" width="9" height="20.0" fill="#2a68f2" stroke="#000" stroke-width="1"/>
<line x1="70.5" y1="620.5" x2="893.5" y2="620.5" stroke="#000" stroke-width="1.2"/>
<path d="M70.5,616.0 C72.7,616.0 79.4,616.0 83.8,616.0 C88.2,616.0 92.7,616.0 97.1,616.0 C101.5,616.0 106.0,616.0 110.4,616.0 C114.9,616.0 119.3,616.0 123.7,616.0 C128.2,616.0 132.6,616.0 137.0,616.0 C141.5,616.0 145.9,616.0 150.3,616.0 C154.8,616.0 159.2,616.0 163.6,616.0 C168.1,616.0 172.5,616.0 176.9,616.0 C181.4,616.0 185.8,616.0 190.2,616.0 C194.7,616.0 199.1,616.0 203.6,616.0 C208.0,616.0 212.4,616.0 216.9,616.0 C221.3,616.0 225.7,616.0 230.2,616.0 C234.6,616.0 239.0,616.0 243.5,616.0 C247.9,616.0 252.3,616.0 256.8,616.0 C261.2,616.0 265.6,616.0 270.1,616.0 C274.5,616.0 279.0,616.0 283.4,616.0 C287.8,616.0 292.3,616.0 296.7,616.0 C301.1,616.0 303.9,616.9 310.0,616.0 C316.1,615.1 327.0,611.2 333.0,610.8 C339.0,610.4 341.7,612.6 346.0,613.5 C350.3,614.5 354.5,615.8 359.0,616.3 C363.5,616.8 368.4,616.3 373.1,616.3 C377.9,616.3 382.6,616.3 387.3,616.3 C392.0,616.3 396.7,616.3 401.4,616.3 C406.1,616.3 410.9,616.3 415.6,616.3 C420.3,616.3 425.0,616.3 429.7,616.3 C434.4,616.3 439.1,616.3 443.9,616.3 C448.6,616.3 453.5,617.1 458.0,616.3 C462.5,615.5 465.8,612.1 471.0,611.6 C476.2,611.1 483.2,613.1 489.0,613.0 C494.8,612.9 500.7,611.0 505.6,610.8 C510.5,610.6 514.3,610.7 518.6,611.6 C522.9,612.5 526.4,616.1 531.6,616.3 C536.8,616.5 543.7,614.1 549.8,612.9 C555.9,611.7 562.8,610.1 568.0,609.0 C573.2,607.9 576.7,606.2 581.0,606.4 C585.3,606.6 589.7,610.4 594.0,610.3 C598.3,610.2 602.7,606.6 607.0,605.6 C611.3,604.6 615.7,603.3 620.0,604.3 C624.3,605.3 628.7,609.6 633.0,611.6 C637.3,613.6 641.6,615.3 646.0,616.0 C650.4,616.7 654.9,616.0 659.4,616.0 C663.8,616.0 668.3,616.0 672.7,616.0 C677.2,616.0 681.6,616.0 686.1,616.0 C690.6,615.9 695.0,615.9 699.5,615.9 C703.9,615.9 708.4,615.9 712.8,615.9 C717.3,615.9 721.7,615.9 726.2,615.9 C730.7,615.9 735.1,615.9 739.6,615.9 C744.0,615.9 748.5,615.9 752.9,615.9 C757.4,615.9 761.8,615.9 766.3,615.8 C770.8,615.8 775.2,615.8 779.7,615.8 C784.1,615.8 788.6,615.8 793.0,615.8 C797.5,615.8 804.2,615.8 806.4,615.8" fill="none" stroke="#2a9a12" stroke-width="2.2" stroke-linejoin="round"/>
<path d="M806.4,615.8 C808.5,618.1 813.7,627.0 819.0,629.8 C824.3,632.6 832.6,631.8 838.0,632.5 C843.4,633.2 847.0,634.1 851.5,633.9 C856.0,633.7 859.8,632.3 865.0,631.2 C870.2,630.1 879.6,627.8 882.5,627.1" fill="none" stroke="#e81818" stroke-width="2.2" stroke-linejoin="round"/>
<rect x="70.5" y="572.5" width="823.0" height="95.0" fill="none" stroke="#a0a0a0" stroke-width="1"/>
<g font-family="Liberation Sans, sans-serif" font-size="12.5" fill="#000" stroke="#000" stroke-width="0.15">
<text x="68" y="585.2" text-anchor="end">10</text><text x="68" y="620" text-anchor="end">0</text><text x="68" y="667.7" text-anchor="end">-10</text>
<text x="897" y="581.2">ICV</text><text x="897" y="592">5, 3, 1</text>
</g>
<text x="899" y="626" font-family="Liberation Sans, sans-serif" font-size="12.5" fill="#2424e6" stroke="#2424e6" stroke-width="0.15">-1,26</text>
<rect x="20.5" y="673.5" width="923" height="99.0" fill="#fff" stroke="#000" stroke-width="1"/>
<line x1="94.5" y1="676" x2="94.5" y2="770.5" stroke="#8a8a8a" stroke-width="1" stroke-dasharray="3,3"/>
<line x1="132.5" y1="676" x2="132.5" y2="770.5" stroke="#8a8a8a" stroke-width="1" stroke-dasharray="3,3"/>
<line x1="169.5" y1="676" x2="169.5" y2="770.5" stroke="#8a8a8a" stroke-width="1" stroke-dasharray="3,3"/>
<line x1="207.5" y1="676" x2="207.5" y2="770.5" stroke="#8a8a8a" stroke-width="1" stroke-dasharray="3,3"/>
<line x1="244.5" y1="676" x2="244.5" y2="770.5" stroke="#8a8a8a" stroke-width="1" stroke-dasharray="3,3"/>
<line x1="269.5" y1="676" x2="269.5" y2="770.5" stroke="#8a8a8a" stroke-width="1" stroke-dasharray="3,3"/>
<line x1="307.5" y1="676" x2="307.5" y2="770.5" stroke="#8a8a8a" stroke-width="1" stroke-dasharray="3,3"/>
<line x1="344.5" y1="676" x2="344.5" y2="770.5" stroke="#8a8a8a" stroke-width="1" stroke-dasharray="3,3"/>
<line x1="382.5" y1="676" x2="382.5" y2="770.5" stroke="#8a8a8a" stroke-width="1" stroke-dasharray="3,3"/>
<line x1="419.5" y1="676" x2="419.5" y2="770.5" stroke="#8a8a8a" stroke-width="1" stroke-dasharray="3,3"/>
<line x1="457.5" y1="676" x2="457.5" y2="770.5" stroke="#8a8a8a" stroke-width="1" stroke-dasharray="3,3"/>
<line x1="494.5" y1="676" x2="494.5" y2="770.5" stroke="#8a8a8a" stroke-width="1" stroke-dasharray="3,3"/>
<line x1="531.5" y1="676" x2="531.5" y2="770.5" stroke="#8a8a8a" stroke-width="1" stroke-dasharray="3,3"/>
<line x1="544.5" y1="676" x2="544.5" y2="770.5" stroke="#8a8a8a" stroke-width="1" stroke-dasharray="3,3"/>
<line x1="581.5" y1="676" x2="581.5" y2="770.5" stroke="#8a8a8a" stroke-width="1" stroke-dasharray="3,3"/>
<line x1="619.5" y1="676" x2="619.5" y2="770.5" stroke="#8a8a8a" stroke-width="1" stroke-dasharray="3,3"/>
<line x1="656.5" y1="676" x2="656.5" y2="770.5" stroke="#8a8a8a" stroke-width="1" stroke-dasharray="3,3"/>
<line x1="694.5" y1="676" x2="694.5" y2="770.5" stroke="#8a8a8a" stroke-width="1" stroke-dasharray="3,3"/>
<line x1="731.5" y1="676" x2="731.5" y2="770.5" stroke="#8a8a8a" stroke-width="1" stroke-dasharray="3,3"/>
<line x1="769.5" y1="676" x2="769.5" y2="770.5" stroke="#8a8a8a" stroke-width="1" stroke-dasharray="3,3"/>
<line x1="806.5" y1="676" x2="806.5" y2="770.5" stroke="#8a8a8a" stroke-width="1" stroke-dasharray="3,3"/>
<line x1="831.5" y1="676" x2="831.5" y2="770.5" stroke="#8a8a8a" stroke-width="1" stroke-dasharray="3,3"/>
<line x1="869.5" y1="676" x2="869.5" y2="770.5" stroke="#8a8a8a" stroke-width="1" stroke-dasharray="3,3"/>
<text x="80" y="687.8" font-family="Liberation Sans, sans-serif" font-size="12.5" fill="#c4c4c4" stroke="#c4c4c4" stroke-width="0.15">Full Estocastico</text>
<line x1="70.5" y1="713.5" x2="893.5" y2="713.5" stroke="#e02020" stroke-width="1" stroke-dasharray="3,2.5"/>
<line x1="70.5" y1="732.5" x2="893.5" y2="732.5" stroke="#1f7a1f" stroke-width="1" stroke-dasharray="3,2.5"/>
<path d="M70.4,748.0 C74.0,747.7 85.2,746.9 92.0,746.1 C98.8,745.3 104.4,744.7 111.2,743.2 C118.0,741.7 126.0,738.8 132.8,737.2 C139.6,735.6 145.6,734.3 152.0,733.6 C158.4,732.9 164.4,733.6 171.2,733.1 C178.0,732.6 186.8,731.3 192.8,730.7 C198.8,730.1 202.4,730.1 207.2,729.8 C212.0,729.4 215.2,729.4 221.6,728.8 C228.0,728.2 238.4,726.8 245.6,726.4 C252.8,726.0 258.4,726.2 264.8,726.4 C271.2,726.6 278.1,727.2 284.0,727.6 C289.9,728.0 294.1,728.3 300.0,728.6 C305.9,728.9 313.9,729.8 319.2,729.4 C324.5,729.0 327.7,727.8 332.0,726.2 C336.3,724.6 340.5,721.9 344.8,719.8 C349.1,717.7 353.3,715.3 357.6,713.4 C361.9,711.5 366.4,710.2 370.4,708.6 C374.4,707.0 377.3,704.8 381.6,703.5 C385.9,702.2 391.5,701.2 396.0,700.6 C400.5,700.0 404.5,699.7 408.8,699.8 C413.1,699.9 417.6,700.9 421.6,701.4 C425.6,701.9 429.1,702.6 432.8,703.0 C436.5,703.4 439.5,703.8 444.0,703.8 C448.5,703.8 453.9,703.8 460.0,702.8 C466.1,701.8 474.9,699.5 480.8,698.0 C486.7,696.5 489.9,695.5 495.2,694.0 C500.5,692.5 507.5,690.4 512.8,689.2 C518.1,688.0 522.1,687.3 527.2,686.8 C532.3,686.3 538.4,685.6 543.2,686.0 C548.0,686.4 551.7,688.1 556.0,688.9 C560.3,689.6 564.5,690.3 568.8,690.5 C573.1,690.7 576.3,690.5 581.6,690.0 C586.9,689.5 594.4,688.3 600.8,687.6 C607.2,686.9 614.1,686.5 620.0,685.7 C625.9,684.9 629.9,683.0 636.0,682.8 C642.1,682.6 650.7,683.9 656.8,684.7 C662.9,685.5 666.7,686.1 672.8,687.6 C678.9,689.1 687.5,691.8 693.6,693.7 C699.7,695.6 705.1,697.7 709.6,698.8 C714.1,699.9 716.5,700.0 720.8,700.1 C725.1,700.2 729.3,699.8 735.2,699.3 C741.1,698.8 749.5,697.9 756.0,696.9 C762.5,695.9 767.5,694.5 774.0,693.5 C780.5,692.5 789.6,691.1 795.0,690.7 C800.4,690.3 800.4,690.1 806.2,691.0 C812.0,691.9 823.2,693.8 830.0,695.9 C836.8,698.0 840.7,700.7 846.8,703.6 C852.9,706.5 860.4,710.3 866.4,713.4 C872.4,716.5 879.8,720.6 882.5,722.1" fill="none" stroke="#c8c8c8" stroke-width="2.1" stroke-dasharray="4.5,3"/>
<path d="M70.4,749.2 C72.4,748.0 78.4,744.0 82.4,742.0 C86.4,740.0 90.4,738.4 94.4,737.2 C98.4,736.0 104.4,735.2 106.4,734.8" fill="none" stroke="#e81818" stroke-width="2.3" stroke-linejoin="round"/>
<path d="M106.4,734.8 C108.4,734.4 114.0,732.8 118.4,732.4 C122.8,732.0 130.4,732.4 132.8,732.4" fill="none" stroke="#2a1a8a" stroke-width="2.3" stroke-linejoin="round"/>
<path d="M132.8,732.4 C135.2,732.6 142.8,733.1 147.2,733.6 C151.6,734.1 155.4,735.3 159.2,735.3 C163.0,735.3 168.2,733.9 170.0,733.6" fill="none" stroke="#e81818" stroke-width="2.3" stroke-linejoin="round"/>
<path d="M170.0,733.6 C172.2,733.0 178.2,731.1 183.2,730.0 C188.2,728.9 193.6,727.8 200.0,727.1 C206.4,726.4 214.0,726.0 221.6,725.7 C229.2,725.4 238.0,724.9 245.6,725.2 C253.2,725.5 261.2,726.6 267.2,727.6 C273.2,728.6 277.2,730.3 281.6,731.2 C286.0,732.1 289.2,732.8 293.6,732.9 C298.0,733.0 303.7,733.6 308.0,731.7 C312.3,729.8 317.3,723.1 319.2,721.4" fill="none" stroke="#2a1a8a" stroke-width="2.3" stroke-linejoin="round"/>
<path d="M319.2,721.4 C321.3,719.3 327.7,713.1 332.0,709.0 C336.3,704.9 340.5,699.0 344.8,696.6 C349.1,694.2 353.3,694.1 357.6,694.5 C361.9,694.9 366.1,697.3 370.4,698.8 C374.7,700.2 376.8,702.6 383.2,703.0 C389.6,703.4 402.7,701.3 408.8,701.4 C414.9,701.5 415.7,703.2 420.0,703.8 C424.3,704.4 430.4,705.1 434.4,705.1 C438.4,705.1 439.7,704.8 444.0,703.5 C448.3,702.2 453.6,700.2 460.0,697.2 C466.4,694.2 476.5,687.8 482.4,685.7 C488.3,683.6 490.9,684.8 495.2,684.7 C499.5,684.6 503.7,684.7 508.0,684.9 C512.3,685.1 515.7,685.1 520.8,686.0 C525.9,686.9 532.5,689.0 538.4,690.5 C544.3,692.1 549.9,695.4 556.0,695.1 C562.1,694.8 568.8,691.2 575.2,688.9 C581.6,686.6 589.1,682.9 594.4,681.5 C599.7,680.1 602.9,680.8 607.2,680.7 C611.5,680.6 615.5,680.7 620.0,680.9 C624.5,681.1 630.4,681.1 634.4,682.0 C638.4,682.9 640.3,684.0 644.0,686.0 C647.7,688.0 652.8,691.7 656.8,693.7 C660.8,695.7 663.9,696.7 668.0,698.0 C672.1,699.3 677.1,701.1 681.6,701.7 C686.1,702.3 690.4,701.7 694.8,701.7 C699.2,701.7 703.7,701.8 708.0,701.7 C712.3,701.6 716.8,701.6 720.8,700.9 C724.8,700.1 726.1,699.0 732.0,697.2 C737.9,695.4 749.7,691.6 756.0,690.0 C762.3,688.4 765.4,688.2 769.8,687.8 C774.2,687.4 778.0,687.5 782.4,687.8 C786.8,688.1 792.4,688.5 796.4,689.6 C800.4,690.7 802.5,692.4 806.2,694.5 C809.9,696.6 814.6,699.4 818.8,702.2 C823.0,705.0 829.3,709.8 831.4,711.3" fill="none" stroke="#2a9a12" stroke-width="2.3" stroke-linejoin="round"/>
<path d="M831.4,711.3 C833.5,712.8 839.8,717.8 844.0,720.4 C848.2,723.0 854.5,726.0 856.6,727.1" fill="none" stroke="#2a1a8a" stroke-width="2.3" stroke-linejoin="round"/>
<path d="M856.6,727.1 C858.7,728.2 864.9,732.4 869.2,733.7 C873.5,735.0 880.3,734.6 882.5,734.8" fill="none" stroke="#e81818" stroke-width="2.3" stroke-linejoin="round"/>
<rect x="70.5" y="675.5" width="823.0" height="95.0" fill="none" stroke="#a0a0a0" stroke-width="1"/>
<g font-family="Liberation Sans, sans-serif" font-size="12.5" fill="#000" stroke="#000" stroke-width="0.15">
<text x="68" y="687.8" text-anchor="end">100</text><text x="68" y="712.8" text-anchor="end">60</text><text x="68" y="732" text-anchor="end">40</text><text x="68" y="770.3" text-anchor="end">0</text>
<text x="897" y="684.2">EST. %</text><text x="897" y="695">FULL</text><text x="897" y="705.8">(28,3,6)</text>
</g>
<text x="899" y="721" font-family="Liberation Sans, sans-serif" font-size="12.5" fill="#c8c8c8" stroke="#c8c8c8" stroke-width="0.15">51,4</text>
<text x="899" y="734" font-family="Liberation Sans, sans-serif" font-size="12.5" fill="#2424e6" stroke="#2424e6" stroke-width="0.15">37,98</text>
<rect x="944.3" y="460" width="8" height="320" fill="#fff"/>
<text x="20" y="790" font-family="Liberation Sans, sans-serif" font-size="13" fill="#000" stroke="#000" stroke-width="0.15">APERAM (APAM.MC)</text>
<text x="306" y="790" textLength="576" lengthAdjust="spacingAndGlyphs" font-family="Liberation Sans, sans-serif" font-size="13.3" fill="#2a1ef0" stroke="#2a1ef0" stroke-width="0.15">/Users/mserra/Library/CloudStorage/Dropbox/WorkDB/DatosBolsa/Configs/Config.DEFAULT.xml</text>
<rect x="919.5" y="776.5" width="66" height="18" fill="#ee0a0a" stroke="#7c7c7c" stroke-width="1"/>
<path d="M920.5,793.5 L984.5,793.5 L984.5,777.5" fill="none" stroke="#fff" stroke-width="1"/>
<text x="923.3" y="789.8" font-family="Liberation Sans, sans-serif" font-size="12" fill="#fff" stroke="#fff" stroke-width="0.15">OFF</text>
<rect x="18.5" y="12.3" width="136" height="20" rx="5" fill="#d4d4d4"/>
<rect x="18.5" y="11.5" width="136" height="20" rx="5" fill="#fff" stroke="#e4e4e4" stroke-width="1"/>
<rect x="136" y="15" width="16" height="14" rx="3.5" fill="#2b7cf6"/>
<polyline points="141,20.5 144,17.8 147,20.5" fill="none" stroke="#fff" stroke-width="1.3"/>
<polyline points="141,23.5 144,26.2 147,23.5" fill="none" stroke="#fff" stroke-width="1.3"/>
<text x="27.5" y="24.8" font-family="Liberation Sans, sans-serif" font-size="13.5" fill="#000" stroke="#000" stroke-width="0.15">CandleSticks</text>
<rect x="194.5" y="12.3" width="99" height="20" rx="5" fill="#d4d4d4"/>
<rect x="194.5" y="11.5" width="99" height="20" rx="5" fill="#fff" stroke="#e4e4e4" stroke-width="1"/>
<rect x="275" y="15" width="16" height="14" rx="3.5" fill="#2b7cf6"/>
<polyline points="280,20.5 283,17.8 286,20.5" fill="none" stroke="#fff" stroke-width="1.3"/>
<polyline points="280,23.5 283,26.2 286,23.5" fill="none" stroke="#fff" stroke-width="1.3"/>
<text x="203.5" y="24.8" font-family="Liberation Sans, sans-serif" font-size="13.5" fill="#000" stroke="#000" stroke-width="0.15">3 mesos</text>
<rect x="304.0" y="12.3" width="90.5" height="20" rx="5" fill="#d4d4d4"/>
<rect x="304.0" y="11.5" width="90.5" height="20" rx="5" fill="#fff" stroke="#e4e4e4" stroke-width="1"/>
<rect x="376.0" y="15" width="16" height="14" rx="3.5" fill="#2b7cf6"/>
<polyline points="381.0,20.5 384.0,17.8 387.0,20.5" fill="none" stroke="#fff" stroke-width="1.3"/>
<polyline points="381.0,23.5 384.0,26.2 387.0,23.5" fill="none" stroke="#fff" stroke-width="1.3"/>
<text x="312" y="24.8" font-family="Liberation Sans, sans-serif" font-size="13.5" fill="#000" stroke="#000" stroke-width="0.15">dia</text>
<defs><radialGradient id="hg" cx="0.35" cy="0.3" r="0.75"><stop offset="0" stop-color="#5058c8"/><stop offset="0.6" stop-color="#22229a"/><stop offset="1" stop-color="#1414b0"/></radialGradient><linearGradient id="trash" x1="0" y1="0" x2="0.3" y2="1"><stop offset="0" stop-color="#8a8a8a"/><stop offset="0.45" stop-color="#606060"/><stop offset="1" stop-color="#222"/></linearGradient><linearGradient id="gear" x1="0" y1="0" x2="0" y2="1"><stop offset="0" stop-color="#b8b8b8"/><stop offset="1" stop-color="#6a6a6a"/></linearGradient><linearGradient id="btn" x1="0" y1="0" x2="0" y2="1"><stop offset="0" stop-color="#f4f4f4"/><stop offset="1" stop-color="#e2e2e2"/></linearGradient></defs>
<circle cx="174" cy="21.2" r="11.8" fill="#8e8ef2"/>
<circle cx="174" cy="21.2" r="10.4" fill="url(#hg)"/>
<text x="174" y="29" text-anchor="middle" font-family="Liberation Sans, sans-serif" font-weight="bold" font-size="20" fill="#dcdcff" stroke="#dcdcff" stroke-width="0.15">?</text>
<rect x="404.5" y="12.5" width="19" height="17" fill="#fff" stroke="#333" stroke-width="1"/>
<rect x="404.5" y="12.5" width="19" height="5" fill="#1a1a1a"/>
<polyline points="407,16 409,15 411,16 413,14.5 415,16" fill="none" stroke="#3c3" stroke-width="0.8"/>
<line x1="404" y1="19" x2="424" y2="19" stroke="#666" stroke-width="0.8"/>
<polyline points="407,26 410,24 412,25.5 416,21.5" fill="none" stroke="#22c" stroke-width="0.9"/>
<line x1="403.5" y1="30.5" x2="424.5" y2="30.5" stroke="#888" stroke-width="1"/>
<rect x="435" y="15" width="14" height="14" rx="3.5" fill="#2b7cf6"/>
<polyline points="438,22 441,25.5 446.5,18" fill="none" stroke="#fff" stroke-width="2" stroke-linecap="round" stroke-linejoin="round"/>
<text x="455.5" y="26.5" font-family="Liberation Sans, sans-serif" font-size="13.5" fill="#000" stroke="#000" stroke-width="0.15">Guies</text>
<rect x="505.5" y="15.5" width="13" height="13" rx="3" fill="#fff" stroke="#b8b8b8" stroke-width="1"/>
<text x="525.5" y="26.5" font-family="Liberation Sans, sans-serif" font-size="13.5" fill="#000" stroke="#000" stroke-width="0.15">Cursor</text>
<path d="M587,10 Q596.5,6 606,10 L603.5,32 Q596.5,35 589.5,32 Z" fill="url(#trash)"/>
<ellipse cx="596.5" cy="10" rx="9.5" ry="3" fill="#3a3a3a" stroke="#777" stroke-width="0.8"/>
<defs><linearGradient id="doc" x1="0" y1="0" x2="0" y2="1"><stop offset="0" stop-color="#f4f8ff"/><stop offset="1" stop-color="#a8c4f4"/></linearGradient><linearGradient id="cam" x1="0" y1="0" x2="0" y2="1"><stop offset="0" stop-color="#d8d8d8"/><stop offset="1" stop-color="#6a6a6a"/></linearGradient></defs>
<rect x="623.5" y="7.5" width="19" height="26" fill="url(#doc)" stroke="#8aaaf0" stroke-width="1"/>
<path d="M621.5,30.5 Q630,26 635,19 Q639,13 644.5,11.5" fill="none" stroke="#9a0000" stroke-width="5.5" stroke-linecap="round"/>
<path d="M625,10 Q630,9 633,15 Q637,24 645,28.5" fill="none" stroke="#9a0000" stroke-width="5.5" stroke-linecap="round"/>
<path d="M623,29.5 Q630,25.5 635,18.5 Q639,13 643.5,12" fill="none" stroke="#d83030" stroke-width="1.6" stroke-linecap="round" opacity="0.8"/>
<path d="M626,10.5 Q630,10 632.5,15 Q636.5,23 643,27.5" fill="none" stroke="#d83030" stroke-width="1.6" stroke-linecap="round" opacity="0.8"/>
<rect x="656.5" y="15.5" width="23" height="16" rx="1.5" fill="url(#cam)" stroke="#4a4a4a" stroke-width="1"/>
<rect x="657" y="16" width="6" height="15" fill="#6a6a6a" opacity="0.5"/>
<rect x="658" y="13" width="6" height="3" rx="1" fill="#5a5a5a"/>
<circle cx="671" cy="25" r="5" fill="#3a3a3a"/>
<circle cx="671" cy="25" r="3.2" fill="#a8a8a8"/>
<rect x="666.5" y="15.5" width="7" height="3" rx="1" fill="#fff" stroke="#555" stroke-width="0.7"/>
<circle cx="671" cy="17" r="7.8" fill="none" stroke="#ecec9a" stroke-width="2" opacity="0.7"/>
<rect x="694" y="11" width="21" height="21" fill="#3a3ab8" stroke="#22227a" stroke-width="0.8"/>
<rect x="697" y="12" width="14" height="9" fill="#b0d0f8"/>
<rect x="698" y="24" width="13" height="8" fill="#d8d8d8"/>
<rect x="700" y="25" width="3" height="6" fill="#3a3ab8"/>
<rect x="712" y="12" width="2" height="2" fill="#fff"/>
<path d="M728.5,14 L736,14 L738,16 L746,16 L746,20 L731,20 L728.5,29 Z" fill="#f8ecd8" stroke="#b48a50" stroke-width="0.9"/>
<path d="M731,20 L750,20 L746,29 L728.5,29 Z" fill="#fbf2e2" stroke="#b48a50" stroke-width="0.9"/>
<defs><linearGradient id="rg" x1="0" y1="0" x2="0" y2="1"><stop offset="0" stop-color="#8ad860"/><stop offset="1" stop-color="#3a9a22"/></linearGradient></defs>
<path d="M766.5,19 Q768,11.5 776,11 Q781.5,11 784,15" fill="none" stroke="url(#rg)" stroke-width="4.6"/>
<path d="M779.5,16.5 L788,12 L787.5,20.5 Z" fill="#5cc03a"/>
<path d="M783.5,22 Q782,29.5 774,30 Q768.5,30 766,26" fill="none" stroke="url(#rg)" stroke-width="4.6"/>
<path d="M770.5,24.5 L762,29 L762.5,20.5 Z" fill="#4aa82e"/>
<defs><linearGradient id="silv" x1="0" y1="0" x2="1" y2="1"><stop offset="0" stop-color="#ffffff"/><stop offset="0.5" stop-color="#d8d8d8"/><stop offset="1" stop-color="#8a8a8a"/></linearGradient><radialGradient id="grn" cx="0.35" cy="0.3" r="0.8"><stop offset="0" stop-color="#8ad070"/><stop offset="1" stop-color="#2a7a1a"/></radialGradient></defs>
<ellipse cx="809" cy="31" rx="12.5" ry="1.6" fill="#111"/>
<circle cx="811.5" cy="20.5" r="10.5" fill="url(#grn)"/>
<path d="M816.5,14 Q812,10.5 807,12.5 Q803,14.5 805.5,18.5 Q807,21 812,21.5 Q815.5,22.5 814,26 Q811.5,28.5 806,26.5" fill="none" stroke="#808080" stroke-width="5.2" stroke-linecap="round"/>
<path d="M816.5,14 Q812,10.5 807,12.5 Q803,14.5 805.5,18.5 Q807,21 812,21.5 Q815.5,22.5 814,26 Q811.5,28.5 806,26.5" fill="none" stroke="url(#silv)" stroke-width="3.8" stroke-linecap="round"/>
<g transform="rotate(-12 845 20)">
<path d="M853.4,12.5 A9.5,10 0 1 0 853.4,28.5" fill="none" stroke="#505050" stroke-width="6"/>
<path d="M853.4,12.5 A9.5,10 0 1 0 853.4,28.5" fill="none" stroke="url(#silv)" stroke-width="4.2"/>
<rect x="833" y="15.8" width="15" height="3" fill="url(#silv)" stroke="#505050" stroke-width="0.8"/>
<rect x="833" y="21.3" width="15" height="3" fill="url(#silv)" stroke="#505050" stroke-width="0.8"/>
</g>
<defs><linearGradient id="gear2" x1="0" y1="0" x2="0" y2="1"><stop offset="0" stop-color="#d4d4d4"/><stop offset="1" stop-color="#7a7a7a"/></linearGradient></defs>
<polygon points="875.79,10.35 876.40,6.67 881.80,6.67 882.41,10.35 883.59,10.84 886.61,8.66 890.44,12.49 888.26,15.51 888.75,16.69 892.43,17.30 892.43,22.70 888.75,23.31 888.26,24.49 890.44,27.51 886.61,31.34 883.59,29.16 882.41,29.65 881.80,33.33 876.40,33.33 875.79,29.65 874.61,29.16 871.59,31.34 867.76,27.51 869.94,24.49 869.45,23.31 865.77,22.70 865.77,17.30 869.45,16.69 869.94,15.51 867.76,12.49 871.59,8.66 874.61,10.84" fill="url(#gear2)" stroke="#5a5a5a" stroke-width="1" stroke-linejoin="round"/>
<circle cx="879.1" cy="20" r="6.5" fill="none" stroke="#9a9a9a" stroke-width="1.5"/>
<circle cx="879.1" cy="20" r="3" fill="#f4f4f4" stroke="#555" stroke-width="1"/>
<g transform="rotate(-6 914 21)">
<rect x="903" y="10" width="21" height="21" fill="#fff" stroke="#777" stroke-width="0.8"/>
<rect x="903" y="10" width="21" height="5" fill="#56b836"/>
<text x="913.5" y="28" text-anchor="middle" font-family="Liberation Sans, sans-serif" font-size="11" fill="#111" stroke="#111" stroke-width="0.15">17</text>
</g>
<circle cx="969" cy="21.5" r="6.6" fill="#fff" stroke="#c8c8c8" stroke-width="1"/>
<rect x="953.5" y="36.5" width="32" height="21" fill="url(#btn)" stroke="#a0a0a0" stroke-width="1"/>
<rect x="953.5" y="85.5" width="32" height="21" fill="url(#btn)" stroke="#a0a0a0" stroke-width="1"/>
<rect x="953.5" y="110.5" width="32" height="21" fill="url(#btn)" stroke="#a0a0a0" stroke-width="1"/>
<rect x="953.5" y="135.5" width="32" height="20" fill="url(#btn)" stroke="#a0a0a0" stroke-width="1"/>
<rect x="953.5" y="160.5" width="32" height="21" fill="url(#btn)" stroke="#a0a0a0" stroke-width="1"/>
<rect x="953.5" y="185.5" width="32" height="20" fill="url(#btn)" stroke="#a0a0a0" stroke-width="1"/>
<rect x="953.5" y="210.5" width="32" height="21" fill="url(#btn)" stroke="#a0a0a0" stroke-width="1"/>
<rect x="953.5" y="235.5" width="32" height="21" fill="url(#btn)" stroke="#a0a0a0" stroke-width="1"/>
<rect x="953.5" y="261.5" width="32" height="20" fill="url(#btn)" stroke="#a0a0a0" stroke-width="1"/>
<rect x="953.5" y="285.5" width="32" height="20" fill="url(#btn)"/>
<path d="M956.5,285.5 L953.5,285.5 L953.5,305.5 L956.5,305.5 M982.5,285.5 L985.5,285.5 L985.5,305.5 L982.5,305.5" fill="none" stroke="#a0a0a0" stroke-width="1"/>
<rect x="953.5" y="310.5" width="32" height="21" fill="url(#btn)"/>
<path d="M956.5,310.5 L953.5,310.5 L953.5,331.5 L956.5,331.5 M982.5,310.5 L985.5,310.5 L985.5,331.5 L982.5,331.5" fill="none" stroke="#a0a0a0" stroke-width="1"/>
<rect x="953.5" y="336.5" width="32" height="20" fill="url(#btn)" stroke="#a0a0a0" stroke-width="1"/>
<rect x="953.5" y="361.5" width="32" height="21" fill="url(#btn)" stroke="#a0a0a0" stroke-width="1"/>
<rect x="953.5" y="385.5" width="32" height="21" fill="url(#btn)" stroke="#a0a0a0" stroke-width="1"/>
<rect x="953.5" y="408.5" width="32" height="21" fill="url(#btn)" stroke="#a0a0a0" stroke-width="1"/>
<rect x="961" y="39" width="16" height="16" fill="#f6f6f6"/>
<defs><radialGradient id="lens" cx="0.4" cy="0.35" r="0.7"><stop offset="0" stop-color="#f4f4f4"/><stop offset="1" stop-color="#9a9a9a"/></radialGradient></defs>
<line x1="969.5" y1="48" x2="975.5" y2="53" stroke="#111" stroke-width="1.7" stroke-linecap="round"/>
<circle cx="966.6" cy="45.2" r="4.2" fill="url(#lens)" stroke="#222" stroke-width="1.2"/>
<rect x="953.5" y="61.5" width="31" height="21" fill="#fdf6f6"/>
<path d="M956.5,61.5 L953.5,61.5 L953.5,82.5 L956.5,82.5 M981.5,61.5 L984.5,61.5 L984.5,82.5 L981.5,82.5" fill="none" stroke="#999" stroke-width="1"/>
<rect x="957" y="62" width="2" height="20" fill="#dde6ff"/><rect x="971" y="62" width="2" height="20" fill="#dde6ff"/>
<path d="M955,82 L955,63 L957,68 L959,70 L960,82 L962,79 L963,74 L965,70 L966,65 L968,74 L969,82 L971,82 L972,80 L974,77 L976,82 L978,82 L980,72 L982,75 L983,82 Z" fill="#4a50b0"/>
<polyline points="955,65 957,69 959,70 963,69 966,69 968,67 970,70 972,69 974,72 976,69 978,70 980,69 983,70" fill="none" stroke="#e02020" stroke-width="1.1"/>
<line x1="957.5" y1="95.5" x2="980.5" y2="95.5" stroke="#e62a2a" stroke-width="2.4"/>
<line x1="957.5" y1="120.5" x2="980.5" y2="120.5" stroke="#2230e8" stroke-width="2.4"/>
<line x1="957.3" y1="151.4" x2="972.4" y2="135.3" stroke="#222" stroke-width="1"/>
<line x1="965.6" y1="156.3" x2="980.7" y2="140.2" stroke="#222" stroke-width="1"/>
<polyline points="962.7,146.5 965.2,156 969.5,143.5 971.2,150 974.8,137 980.5,141.5 975.8,145" fill="none" stroke="#3a3ae6" stroke-width="1"/>
<line x1="958.3" y1="181.2" x2="980.5" y2="159.5" stroke="#151515" stroke-width="1.4"/>
<polyline points="961.2,173.6 967,173.1 966.1,178.4" fill="none" stroke="#2a2ae0" stroke-width="1.3"/>
<polyline points="973.4,159.9 972.4,166.2 978.8,165.7" fill="none" stroke="#2a2ae0" stroke-width="1.3"/>
<line x1="958.3" y1="206.2" x2="980.5" y2="184.5" stroke="#151515" stroke-width="1.4"/>
<polyline points="961.2,198.6 967,198.1 966.1,203.4" fill="none" stroke="#2a2ae0" stroke-width="1.3"/>
<polyline points="973.4,184.9 972.4,191.2 978.8,190.7" fill="none" stroke="#2a2ae0" stroke-width="1.3"/>
<path d="M966,189.5 L959,189.5 L962.8,193 L959,196.5 L966,196.5" fill="none" stroke="#e82222" stroke-width="1.6"/>
<path d="M968,214.6 L971,214.6 L971,217.5 L974.4,217.5 L969.5,225.3 L964.6,217.5 L968,217.5 Z" fill="#f01414"/>
<path d="M968,251.5 L971,251.5 L971,248.5 L974.4,248.5 L969.5,240.5 L964.6,248.5 L968,248.5 Z" fill="#1414f0"/>
<path d="M960,266 L962.6,266 L962.6,269.7 L966,269.7 L966,272.3 L962.6,272.3 L962.6,276 L960,276 L960,272.3 L956.8,272.3 L956.8,269.7 L960,269.7 Z" fill="#8ac878" stroke="#5aa840" stroke-width="0.8"/>
<path d="M970,266 L973.5,266 L973.5,269.5 L978,269.5 L971.7,276 L965.6,269.5 L970,269.5 Z" fill="#e02020"/>
<circle cx="981.2" cy="275" r="2.4" fill="#fff" stroke="#e82020" stroke-width="1"/>
<rect x="957.3" y="290.8" width="6.400000000000091" height="2" fill="#3a3a3a"/>
<rect x="966.1" y="290.8" width="6.7999999999999545" height="2" fill="#3a3a3a"/>
<rect x="975.2" y="290.8" width="5.7999999999999545" height="2" fill="#3a3a3a"/>
<rect x="957.3" y="295.90000000000003" width="6.400000000000091" height="2" fill="#3a3a3a"/>
<rect x="966.1" y="295.90000000000003" width="6.7999999999999545" height="2" fill="#3a3a3a"/>
<rect x="975.2" y="295.90000000000003" width="5.7999999999999545" height="2" fill="#3a3a3a"/>
<rect x="957.3" y="301.0" width="6.400000000000091" height="2" fill="#3a3a3a"/>
<rect x="966.1" y="301.0" width="6.7999999999999545" height="2" fill="#3a3a3a"/>
<rect x="975.2" y="301.0" width="5.7999999999999545" height="2" fill="#3a3a3a"/>
<line x1="956" y1="313" x2="972" y2="313" stroke="#1414f0" stroke-width="1.2"/>
<line x1="956" y1="329.8" x2="972" y2="329.8" stroke="#1414f0" stroke-width="1.2"/>
<line x1="964" y1="313" x2="964" y2="329.8" stroke="#1414f0" stroke-width="1.3"/>
<path d="M961.2,317.6 L964,313.5 L966.8,317.6 Z M961.2,325.6 L964,329.5 L966.8,325.6 Z" fill="#1414f0"/>
<line x1="980.7" y1="315.7" x2="973.9" y2="328.8" stroke="#111" stroke-width="1.3"/>
<ellipse cx="975.584" cy="318.02" rx="1.3260000000000116" ry="1.833000000000003" fill="none" stroke="#111" stroke-width="1.2"/>
<ellipse cx="979.172" cy="326.48" rx="1.3260000000000116" ry="1.833000000000003" fill="none" stroke="#111" stroke-width="1.2"/>
<line x1="958.8" y1="341" x2="971" y2="341" stroke="#3468f0" stroke-width="1.2"/>
<line x1="958.5" y1="347" x2="971" y2="347" stroke="#111" stroke-width="1.5"/>
<line x1="958.5" y1="352.3" x2="971" y2="352.3" stroke="#ea4a3a" stroke-width="2"/>
<line x1="980.7" y1="341.0" x2="972.7" y2="353.7" stroke="#111" stroke-width="1.3"/>
<ellipse cx="974.72" cy="343.24" rx="1.53" ry="1.7809999999999986" fill="none" stroke="#111" stroke-width="1.2"/>
<ellipse cx="978.86" cy="351.46" rx="1.53" ry="1.7809999999999986" fill="none" stroke="#111" stroke-width="1.2"/>
<rect x="960.2" y="362" width="18.6" height="19.4" fill="#dcdce6"/>
<defs><radialGradient id="nog" cx="0.45" cy="0.4" r="0.6"><stop offset="0" stop-color="#f05050"/><stop offset="1" stop-color="#a01818"/></radialGradient></defs>
<circle cx="969.5" cy="371.5" r="7" fill="none" stroke="url(#nog)" stroke-width="2.6"/>
<line x1="964.5" y1="366.5" x2="974.5" y2="376.5" stroke="#c02828" stroke-width="2.6"/>
<defs><radialGradient id="dotg" cx="0.5" cy="0.5" r="0.5"><stop offset="0" stop-color="#ffe0e0"/><stop offset="0.5" stop-color="#f06060"/><stop offset="1" stop-color="#e01010"/></radialGradient></defs>
<circle cx="969" cy="395.7" r="6" fill="url(#dotg)"/>
<path d="M963,418 Q965,412.5 971.5,413 L972.5,410.5 L975.8,415.5 L970,417 L970.8,415.2 Q966.5,415 964.5,418 Z" fill="#2a68e0"/>
<path d="M975.5,420.5 Q973.5,426 967,425.5 L966,428 L962.7,423 L968.5,421.5 L967.7,423.3 Q972,423.5 974,420.5 Z" fill="#2a68e0"/>
<circle cx="969" cy="472.8" r="6.6" fill="#fff" stroke="#c8c8c8" stroke-width="1"/>
<rect x="953.5" y="487.5" width="32" height="21" fill="#fff" stroke="#a0a0a0" stroke-width="1"/>
<rect x="953.5" y="513.5" width="32" height="21" fill="url(#btn)" stroke="#a0a0a0" stroke-width="1"/>
<rect x="953.5" y="541.5" width="32" height="21" fill="url(#btn)" stroke="#a0a0a0" stroke-width="1"/>
<path d="M961.8,493 L965.2,493 L965.2,496.5 L968.9,496.5 L963.5,502.5 L958.1,496.5 L961.8,496.5 Z" fill="#e02a1a"/>
<path d="M975,502.5 L978.4,502.5 L978.4,499 L982.4,499 L976.7,493 L971,499 L975,499 Z" fill="#6cc044"/>
<line x1="958.8" y1="517.8" x2="971" y2="517.8" stroke="#3468f0" stroke-width="1.2"/>
<line x1="958.5" y1="524" x2="971" y2="524" stroke="#111" stroke-width="1.5"/>
<line x1="958.5" y1="529.3" x2="971" y2="529.3" stroke="#ea4a3a" stroke-width="2"/>
<line x1="980.5" y1="517.5" x2="972.8" y2="530.8" stroke="#111" stroke-width="1.3"/>
<ellipse cx="974.736" cy="519.86" rx="1.4790000000000079" ry="1.8589999999999942" fill="none" stroke="#111" stroke-width="1.2"/>
<ellipse cx="978.7379999999999" cy="528.4399999999999" rx="1.4790000000000079" ry="1.8589999999999942" fill="none" stroke="#111" stroke-width="1.2"/>
<line x1="956" y1="555.2" x2="984" y2="555.2" stroke="#2a9a2a" stroke-width="1" stroke-dasharray="2,2.5"/>
<line x1="978" y1="554" x2="978" y2="561" stroke="#4040a0" stroke-width="0.8"/>
<path d="M955,546.5 Q963,551 967,560 L976,551 Q978,547 980.5,541.5" fill="none" stroke="#1a1af0" stroke-width="1.8"/>
<path d="M955,545 Q963,547 969.6,557.3 Q975,555 976.5,551 L982,541.5" fill="none" stroke="#e82020" stroke-width="1.8"/>
<circle cx="969" cy="580" r="6.9" fill="#2b7cf6"/>
<circle cx="969" cy="580" r="2.6" fill="#fff"/>
<rect x="953.5" y="595.5" width="32" height="21" fill="#fff" stroke="#a0a0a0" stroke-width="1"/>
<rect x="953.5" y="619.5" width="32" height="21" fill="url(#btn)" stroke="#a0a0a0" stroke-width="1"/>
<rect x="953.5" y="643.5" width="32" height="20.5" fill="url(#btn)" stroke="#a0a0a0" stroke-width="1"/>
<path d="M961.8,601 L965.2,601 L965.2,604.5 L968.9,604.5 L963.5,610.5 L958.1,604.5 L961.8,604.5 Z" fill="#e02a1a"/>
<path d="M975,610.5 L978.4,610.5 L978.4,607 L982.4,607 L976.7,601 L971,607 L975,607 Z" fill="#6cc044"/>
<line x1="958.8" y1="623.8" x2="971" y2="623.8" stroke="#3468f0" stroke-width="1.2"/>
<line x1="958.5" y1="630" x2="971" y2="630" stroke="#111" stroke-width="1.5"/>
<line x1="958.5" y1="635.3" x2="971" y2="635.3" stroke="#ea4a3a" stroke-width="2"/>
<line x1="980.5" y1="623.5" x2="972.8" y2="636.8" stroke="#111" stroke-width="1.3"/>
<ellipse cx="974.736" cy="625.86" rx="1.4790000000000079" ry="1.8589999999999942" fill="none" stroke="#111" stroke-width="1.2"/>
<ellipse cx="978.7379999999999" cy="634.4399999999999" rx="1.4790000000000079" ry="1.8589999999999942" fill="none" stroke="#111" stroke-width="1.2"/>
<line x1="956" y1="657.2" x2="984" y2="657.2" stroke="#2a9a2a" stroke-width="1" stroke-dasharray="2,2.5"/>
<line x1="978" y1="656" x2="978" y2="663" stroke="#4040a0" stroke-width="0.8"/>
<path d="M955,648.5 Q963,653 967,662 L976,653 Q978,649 980.5,643.5" fill="none" stroke="#1a1af0" stroke-width="1.8"/>
<path d="M955,647 Q963,649 969.6,659.3 Q975,657 976.5,653 L982,643.5" fill="none" stroke="#e82020" stroke-width="1.8"/>
<circle cx="969" cy="682.6" r="6.6" fill="#fff" stroke="#c8c8c8" stroke-width="1"/>
<rect x="953.5" y="697.5" width="32" height="20.5" fill="#fff" stroke="#a0a0a0" stroke-width="1"/>
<rect x="953.5" y="722.5" width="32" height="20.5" fill="url(#btn)" stroke="#a0a0a0" stroke-width="1"/>
<rect x="953.5" y="747.5" width="32" height="20.299999999999955" fill="url(#btn)" stroke="#a0a0a0" stroke-width="1"/>
<path d="M961.8,703 L965.2,703 L965.2,706.5 L968.9,706.5 L963.5,712.5 L958.1,706.5 L961.8,706.5 Z" fill="#e02a1a"/>
<path d="M975,712.5 L978.4,712.5 L978.4,709 L982.4,709 L976.7,703 L971,709 L975,709 Z" fill="#6cc044"/>
<line x1="958.8" y1="726.8" x2="971" y2="726.8" stroke="#3468f0" stroke-width="1.2"/>
<line x1="958.5" y1="733" x2="971" y2="733" stroke="#111" stroke-width="1.5"/>
<line x1="958.5" y1="738.3" x2="971" y2="738.3" stroke="#ea4a3a" stroke-width="2"/>
<line x1="980.5" y1="726.5" x2="972.8" y2="739.8" stroke="#111" stroke-width="1.3"/>
<ellipse cx="974.736" cy="728.86" rx="1.4790000000000079" ry="1.8589999999999942" fill="none" stroke="#111" stroke-width="1.2"/>
<ellipse cx="978.7379999999999" cy="737.4399999999999" rx="1.4790000000000079" ry="1.8589999999999942" fill="none" stroke="#111" stroke-width="1.2"/>
<line x1="956" y1="761.2" x2="984" y2="761.2" stroke="#2a9a2a" stroke-width="1" stroke-dasharray="2,2.5"/>
<line x1="978" y1="760" x2="978" y2="767" stroke="#4040a0" stroke-width="0.8"/>
<path d="M955,752.5 Q963,757 967,766 L976,757 Q978,753 980.5,747.5" fill="none" stroke="#1a1af0" stroke-width="1.8"/>
<path d="M955,751 Q963,753 969.6,763.3 Q975,761 976.5,757 L982,747.5" fill="none" stroke="#e82020" stroke-width="1.8"/>
</svg>
</body></html>
